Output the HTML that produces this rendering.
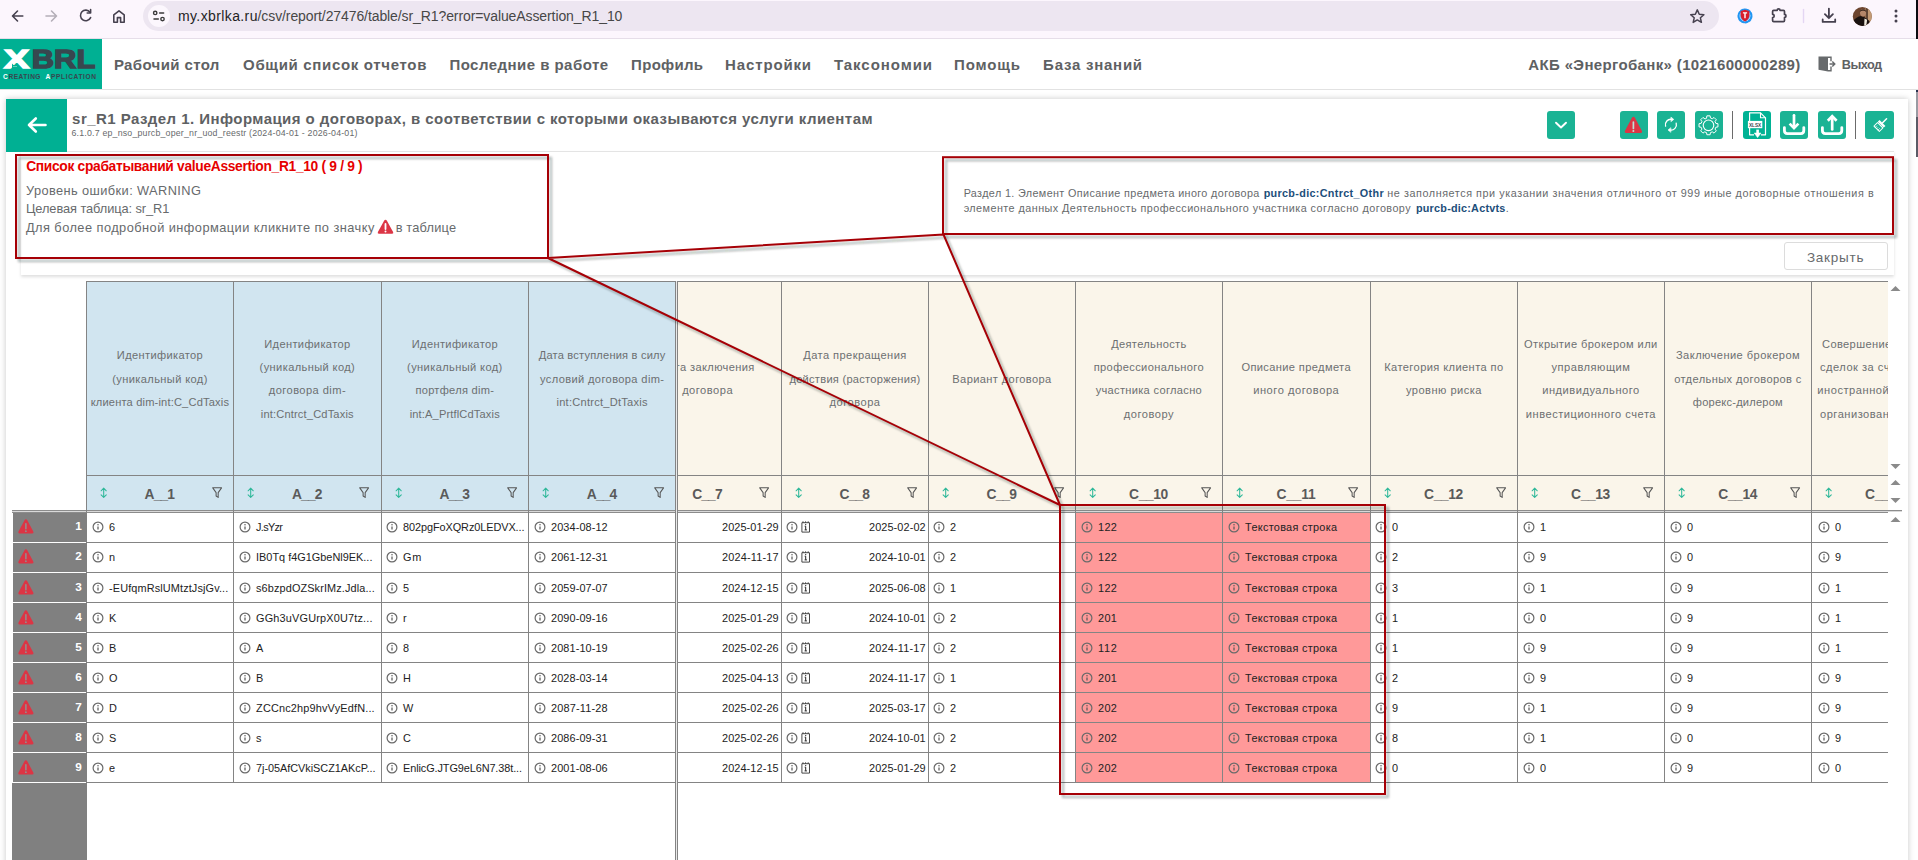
<!DOCTYPE html>
<html lang="ru"><head><meta charset="utf-8"><title>XBRL — sr_R1</title>
<style>
html,body{margin:0;padding:0}
body{width:1918px;height:860px;overflow:hidden;background:#fff;font-family:"Liberation Sans",sans-serif;color:#676a6c}
#root{position:relative;width:1918px;height:860px;overflow:hidden;background:#fff}
.t{position:absolute;white-space:pre;color:#676a6c}
.a{position:absolute}
svg{position:absolute;overflow:visible}
.btn{position:absolute;top:111px;width:28px;height:28px;border-radius:3px;background:#1ab394}
.hl{position:absolute;background:#848484;height:1px}
.vl{position:absolute;background:#848484;width:1px}
</style></head><body><div id="root">
<div class="a" id="chrome" style="left:0;top:0;width:1918px;height:38px;background:#fcf6fd;border-bottom:1px solid #e6dee9"></div>
<div class="a" style="left:143px;top:.5px;width:1576px;height:30.5px;border-radius:15.5px;background:#ede6f1"></div>
<div class="a" style="left:147.8px;top:4.8px;width:22.4px;height:22.4px;border-radius:50%;background:#fcf7fd"></div>
<svg style="left:0;top:0" width="240" height="38" viewBox="0 0 240 38" fill="none" stroke-linecap="round" stroke-linejoin="round">
<path d="M22.8 16H12.8M17.5 11l-5 5 5 5" stroke="#46414f" stroke-width="1.6"/>
<path d="M46 16h10.2M51.5 11l5 5-5 5" stroke="#b4aeb8" stroke-width="1.6"/>
<path d="M90 12.2A5.3 5.3 0 1 0 90.6 17.6" stroke="#46414f" stroke-width="1.6"/>
<path d="M90.6 9.6v3.4h-3.4" stroke="#46414f" stroke-width="1.6"/>
<path d="M113.8 22.2v-7.4l5.2-4 5.2 4v7.4h-3.6v-4.6h-3.2v4.6z" stroke="#46414f" stroke-width="1.6"/>
<circle cx="155.2" cy="12.9" r="1.7" stroke="#3a3a3a" stroke-width="1.4"/><path d="M159.6 12.9h4" stroke="#3a3a3a" stroke-width="1.5"/>
<circle cx="162.5" cy="19.1" r="1.7" stroke="#3a3a3a" stroke-width="1.4"/><path d="M154 19.1h4.300" stroke="#3a3a3a" stroke-width="1.5"/>
</svg>
<div class="t" style="left:177.96px;top:6.00px;font-size:14px;line-height:20px;letter-spacing:0.391px;color:#1f1f1f;">my.xbrlka.ru</div>
<div class="t" style="left:257.56px;top:6.00px;font-size:14px;line-height:20px;letter-spacing:-0.095px;color:#474747;">/csv/report/27476/table/sr_R1?error=valueAssertion_R1_10</div>
<svg style="left:1680px;top:0" width="238" height="38" viewBox="1680 0 238 38" fill="none" stroke-linecap="round" stroke-linejoin="round">
<path d="M1697.300 9.900l1.950 4.300 4.650.5-3.500 3.100 1 4.550-4.100-2.400-4.100 2.400 1-4.550-3.500-3.100 4.650-.5z" stroke="#46414f" stroke-width="1.500"/>
<circle cx="1745" cy="15.900" r="6.400" stroke="#2196f3" stroke-width="2.200" stroke-dasharray="2.300 1.300"/><circle cx="1745" cy="15.900" r="5" fill="#6db9f7" stroke="none"/>
<path d="M1745 9.800l4.400 1.300v4c0 3.200-2.100 5.300-4.400 6.400-2.300-1.100-4.400-3.200-4.400-6.400v-4z" fill="#d81e2c" stroke="none"/>
<path d="M1742.900 12.900h4.200M1745 12.900v5.400" stroke="#fff" stroke-width="1.400" stroke-linecap="butt"/>
<path d="M1773.700 10.300h3.500a1.400 1.400 0 0 1 2.800 0h3.400q1.100 0 1.100 1.100v3a1.500 1.500 0 0 1 0 3v3.100q0 1.100-1.100 1.100h-9.700q-1.100 0-1.100-1.100v-3a1.600 1.600 0 0 0 0-3.200v-2.900q0-1.100 1.100-1.100z" stroke="#46414f" stroke-width="1.700"/>
<path d="M1803.500 9.500v13" stroke="#e4d6f3" stroke-width="1.400"/>
<path d="M1828.900 8.600v9.400M1824.900 14.200l4 4 4-4M1822.700 19.400v2.500h12.500v-2.500" stroke="#46414f" stroke-width="1.800"/>
<clipPath id="av"><circle cx="1862.300" cy="16.400" r="9.500"/></clipPath>
<g clip-path="url(#av)" stroke="none"><rect x="1852" y="6" width="21" height="21" fill="#6d452f"/><rect x="1865.500" y="6" width="8" height="21" fill="#c39a74"/><rect x="1866.200" y="6" width="1.600" height="14" fill="#4a3226"/>
<path d="M1853 27v-5.500c2-3.500 5-5 8-5.500l4 1.500 4.500 3.500v6z" fill="#1a1210"/><path d="M1864.500 18.500l2.600 1.200-1 7.300h-2z" fill="#efe9dc"/>
<ellipse cx="1863" cy="12.800" rx="3" ry="3.700" fill="#b5876a"/><path d="M1859.800 12c0-3.500 6.400-3.800 6.400 0-1.500-1.600-4.900-1.600-6.400 0z" fill="#3a261c"/></g>
<circle cx="1896" cy="11" r="1.500" fill="#46414f"/><circle cx="1896" cy="16" r="1.500" fill="#46414f"/><circle cx="1896" cy="21" r="1.500" fill="#46414f"/>
</svg>
<div class="a" style="left:1916px;top:0;width:2px;height:72px;background:#0b0b10"></div>
<div class="a" style="left:1916px;top:72px;width:2px;height:20px;background:#2a3350"></div>
<div class="a" style="left:1916px;top:92px;width:2px;height:25px;background:#9a9aa2"></div>
<div class="a" style="left:1916px;top:117px;width:2px;height:40px;background:#5b5b66"></div>
<div class="a" id="nav" style="left:0;top:39px;width:1918px;height:50px;background:#fff;border-bottom:1px solid #e2e2e2"></div>
<div class="a" id="logo" style="left:0;top:39px;width:102px;height:50px;background:#00b093"></div>
<svg style="left:0;top:39px" width="102" height="50" viewBox="0 39 102 50" font-family="'Liberation Sans',sans-serif" font-weight="700">
<text x="4" y="68.200" font-size="26" fill="#fff" stroke="#fff" stroke-width="1.4" textLength="25.200" lengthAdjust="spacingAndGlyphs">X</text>
<text x="31.800" y="68.200" font-size="26" fill="#37474f" stroke="#37474f" stroke-width="1.4" textLength="63.500" lengthAdjust="spacingAndGlyphs">BRL</text>
<path d="M12 69v-5.500l1.500 1.500h3l1.500-1.500v5.500z" fill="#00b093"/><circle cx="14" cy="66.600" r=".5" fill="#fff"/><circle cx="16" cy="66.600" r=".5" fill="#fff"/>
<text x="3" y="79" font-size="6.600" fill="#fff" textLength="4.800" lengthAdjust="spacingAndGlyphs">C</text>
<text x="8.500" y="79" font-size="6.600" fill="#37474f" textLength="32" lengthAdjust="spacing">REATING</text>
<text x="45.500" y="79" font-size="6.600" fill="#fff" textLength="4.800" lengthAdjust="spacingAndGlyphs">A</text>
<text x="51" y="79" font-size="6.600" fill="#37474f" textLength="45" lengthAdjust="spacing">PPLICATION</text>
</svg>
<div class="t" style="left:113.90px;top:54.00px;font-size:15px;line-height:21px;letter-spacing:0.378px;font-weight:700;color:#5e6163;">Рабочий стол</div>
<div class="t" style="left:243.10px;top:54.00px;font-size:15px;line-height:21px;letter-spacing:0.672px;font-weight:700;color:#5e6163;">Общий список отчетов</div>
<div class="t" style="left:449.40px;top:54.00px;font-size:15px;line-height:21px;letter-spacing:0.469px;font-weight:700;color:#5e6163;">Последние в работе</div>
<div class="t" style="left:631.10px;top:54.00px;font-size:15px;line-height:21px;letter-spacing:0.299px;font-weight:700;color:#5e6163;">Профиль</div>
<div class="t" style="left:725.10px;top:54.00px;font-size:15px;line-height:21px;letter-spacing:0.857px;font-weight:700;color:#5e6163;">Настройки</div>
<div class="t" style="left:834.10px;top:54.00px;font-size:15px;line-height:21px;letter-spacing:0.943px;font-weight:700;color:#5e6163;">Таксономии</div>
<div class="t" style="left:954.10px;top:54.00px;font-size:15px;line-height:21px;letter-spacing:0.863px;font-weight:700;color:#5e6163;">Помощь</div>
<div class="t" style="left:1043.10px;top:54.00px;font-size:15px;line-height:21px;letter-spacing:0.756px;font-weight:700;color:#5e6163;">База знаний</div>
<div class="t" style="left:1528.30px;top:54.00px;font-size:15px;line-height:21px;letter-spacing:0.359px;font-weight:700;color:#5e6163;">АКБ «Энергобанк» (1021600000289)</div>
<svg style="left:1817px;top:55px" width="20" height="18" viewBox="1817 55 20 18">
<path d="M1818.500 56.500h9.500v15l-9.500-1.800z" fill="#676a6c"/><path d="M1828 57.300h3v4M1831 66.500v4.200h-3" fill="none" stroke="#676a6c" stroke-width="1.400"/>
<path d="M1829.500 64h5M1832.300 61.500l2.500 2.500-2.500 2.500" fill="none" stroke="#676a6c" stroke-width="1.400"/></svg>
<div class="t" style="left:1841.84px;top:56.00px;font-size:12.7px;line-height:18px;letter-spacing:-0.544px;font-weight:700;color:#5e6163;">Выход</div>
<div class="a" id="card" style="left:6px;top:99px;width:1902px;height:800px;background:#fff;box-shadow:0 0 6px rgba(0,0,0,.22)"></div>
<div class="t" style="left:72.10px;top:108.00px;font-size:15px;line-height:21px;letter-spacing:0.449px;font-weight:700;color:#5e6163;">sr_R1 Раздел 1. Информация о договорах, в соответствии с которыми оказываются услуги клиентам</div>
<div class="t" style="left:71.47px;top:127.00px;font-size:8.8px;line-height:12px;letter-spacing:0.197px;">6.1.0.7 ep_nso_purcb_oper_nr_uod_reestr (2024-04-01 - 2026-04-01)</div>
<div class="btn" style="left:1547px;width:28px"><svg style="left:0;top:0" width="28" height="28" viewBox="0 0 28 28" fill="none" stroke="#fff" stroke-linecap="round" stroke-linejoin="round"><path d="M9 11.700l5 4.800 5-4.800" stroke-width="1.900"/></svg></div>
<div class="btn" style="left:1620px;width:28px"><svg style="left:0;top:0" width="28" height="28" viewBox="0 0 28 28" fill="none" stroke="#fff" stroke-linecap="round" stroke-linejoin="round"><path d="M13.400 5.800q1 0 1.500 1l6.900 13q.9 2.100-1.100 2.100h-14.600q-2 0-1.100-2.100l6.900-13q.5-1 1.500-1z" fill="#dc3545" stroke="none"/><path d="M13.400 11v6.400" stroke="#bfe0d8" stroke-width="1.700"/><circle cx="13.400" cy="20" r="1" fill="#bfe0d8" stroke="none"/></svg></div>
<div class="btn" style="left:1657px;width:28px"><svg style="left:0;top:0" width="28" height="28" viewBox="0 0 28 28" fill="none" stroke="#fff" stroke-linecap="round" stroke-linejoin="round"><path d="M8.600 15.200a5.400 5.400 0 0 1 6.300-6.800M19.200 12.200a5.400 5.400 0 0 1-6.300 6.800" stroke-width="1.300"/><path d="M14.200 6.300l2.600 2.100-2.600 2.100zM13.600 16.900l-2.600 2.100 2.600 2.100z" fill="#fff" stroke-width=".6"/></svg></div>
<div class="btn" style="left:1695px;width:28px"><svg style="left:0;top:0" width="28" height="28" viewBox="0 0 28 28" fill="none" stroke="#fff" stroke-linecap="round" stroke-linejoin="round"><path d="M11.55 6.96L11.88 4.84L15.12 4.84L15.45 6.96L17.31 7.73L19.04 6.46L21.34 8.76L20.07 10.49L20.84 12.35L22.96 12.68L22.96 15.92L20.84 16.25L20.07 18.11L21.34 19.84L19.04 22.14L17.31 20.87L15.45 21.64L15.12 23.76L11.88 23.76L11.55 21.64L9.69 20.87L7.96 22.14L5.66 19.84L6.93 18.11L6.16 16.25L4.04 15.92L4.04 12.68L6.16 12.35L6.93 10.49L5.66 8.76L7.96 6.46L9.69 7.73z" stroke-width="1"/><circle cx="13.500" cy="14.300" r="5.300" stroke-width="1.100"/></svg></div>
<div class="a" style="left:1732px;top:111px;width:1px;height:28px;background:#6b6b6b"></div>
<div class="btn" style="left:1743px;background:#00b294"><svg style="left:0;top:0" width="28" height="28" viewBox="0 0 28 28" fill="none" stroke="#fff" stroke-linejoin="round"><path d="M11 23.800h-4.400v-22h10.900l5 5v17h-4.500" stroke-width="1.200"/><path d="M17.500 1.800v5h5" stroke-width="1.100"/><rect x="4.900" y="9.900" width="14.400" height="7.300" fill="#fff" stroke="none"/><path d="M14.600 18.600v4" stroke-width="2.600"/><path d="M11.200 22l3.400 4.600 3.400-4.600z" fill="#fff" stroke-width=".5"/><text x="6" y="15.700" font-family="'Liberation Sans',sans-serif" font-size="5.600" font-weight="700" fill="#37474f" stroke="none" textLength="12.200" lengthAdjust="spacingAndGlyphs">XLSX</text></svg></div>
<div class="btn" style="left:1780px;width:28px"><svg style="left:0;top:0" width="28" height="28" viewBox="0 0 28 28" fill="none" stroke="#fff" stroke-linecap="round" stroke-linejoin="round"><path d="M14 4.300v12" stroke-width="2.700"/><path d="M9.600 12.600l4.400 4.500 4.400-4.500" stroke-width="2.700" stroke-linejoin="miter" stroke-linecap="butt"/><path d="M4.400 16.600v3q0 3 3 3h13.400q3 0 3-3v-3" stroke-width="2.800"/></svg></div>
<div class="btn" style="left:1818px;width:28px"><svg style="left:0;top:0" width="28" height="28" viewBox="0 0 28 28" fill="none" stroke="#fff" stroke-linecap="round" stroke-linejoin="round"><path d="M14.200 6v12.400" stroke-width="2.700"/><path d="M9.800 9.800l4.400-4.500 4.400 4.500" stroke-width="2.700" stroke-linejoin="miter" stroke-linecap="butt"/><path d="M4.400 16.600v3q0 3 3 3h13.400q3 0 3-3v-3" stroke-width="2.800"/></svg></div>
<div class="a" style="left:1855px;top:111px;width:1px;height:28px;background:#6b6b6b"></div>
<div class="btn" style="left:1865px;width:29px"><svg style="left:0;top:0" width="29" height="28" viewBox="0 0 29 28" fill="none" stroke="#fff" stroke-linecap="round" stroke-linejoin="round"><g transform="rotate(45 15.200 14.200)"><path d="M15.200 5.200v6" stroke-width="1.500"/><path d="M11 11h8.400v2.400h-8.400z" fill="#fff" stroke="none"/><path d="M11.400 14.200h7.600v5h-7.600z" stroke-width="1"/><path d="M13.300 17v2M15.200 17.600v1.400M17.100 17v2" stroke-width=".7"/></g></svg></div>
<div class="a" id="errpanel" style="left:21px;top:151px;width:1873px;height:123px;background:#fff;border-top:1px solid #e4e4e4;box-shadow:0 2px 3px rgba(0,0,0,.13)"></div>
<div class="a" id="back" style="left:6px;top:99px;width:61px;height:52.5px;background:#00b093"></div>
<svg style="left:24px;top:114px" width="26" height="22" viewBox="24 114 26 22"><path d="M45.500 125h-16.500M35.800 118.500l-6.800 6.500 6.800 6.500" fill="none" stroke="#fff" stroke-width="2.600" stroke-linecap="round" stroke-linejoin="round"/></svg>
<div class="t" style="left:26.17px;top:157.00px;font-size:13.8px;line-height:19px;letter-spacing:-0.317px;font-weight:700;color:#e60000;">Список срабатываний valueAssertion_R1_10 ( 9 / 9 )</div>
<div class="t" style="left:25.93px;top:182.00px;font-size:12.8px;line-height:18px;letter-spacing:0.411px;">Уровень ошибки: WARNING</div>
<div class="t" style="left:25.93px;top:200.00px;font-size:12.8px;line-height:18px;letter-spacing:-0.067px;">Целевая таблица: sr_R1</div>
<div class="t" style="left:25.93px;top:219.00px;font-size:12.8px;line-height:18px;letter-spacing:0.455px;">Для более подробной информации кликните по значку</div>
<svg style="left:377px;top:219px" width="17" height="16" viewBox="0 0 17 16"><path d="M8.500 .8q.9 0 1.400.9l6.200 11.300q.8 1.800-1 1.800h-13.200q-1.800 0-1-1.800l6.200-11.300q.5-.9 1.400-.9z" fill="#dc3545"/><path d="M8.500 5v5" stroke="#fff" stroke-width="1.800" stroke-linecap="round"/><circle cx="8.500" cy="12.400" r="1" fill="#fff"/></svg>
<div class="t" style="left:395.63px;top:219.00px;font-size:12.8px;line-height:18px;letter-spacing:0.191px;">в таблице</div>
<div class="t" style="left:963.65px;top:186.00px;font-size:10.8px;line-height:15px;letter-spacing:0.370px;">Раздел 1. Элемент Описание предмета иного договора</div>
<div class="t" style="left:1263.65px;top:186.00px;font-size:10.8px;line-height:15px;letter-spacing:0.331px;font-weight:700;color:#1c4e7a;">purcb-dic:Cntrct_Othr</div>
<div class="t" style="left:1387.35px;top:186.00px;font-size:10.8px;line-height:15px;letter-spacing:0.560px;">не заполняется при указании значения отличного от 999 иные договорные отношения в</div>
<div class="t" style="left:963.65px;top:201.00px;font-size:10.8px;line-height:15px;letter-spacing:0.452px;">элементе данных Деятельность профессионального участника согласно договору</div>
<div class="t" style="left:1415.95px;top:201.00px;font-size:10.8px;line-height:15px;letter-spacing:0.240px;font-weight:700;color:#1c4e7a;">purcb-dic:Actvts</div>
<div class="t" style="left:1505.75px;top:201.00px;font-size:10.8px;line-height:15px;">.</div>
<div class="a" id="close" style="left:1783.5px;top:241.5px;width:102px;height:26px;border:1px solid #dcdcdc;border-radius:3px;background:#fff;box-sizing:content-box"></div>
<div class="t" style="left:1806.89px;top:248.00px;font-size:13.5px;line-height:19px;letter-spacing:0.783px;">Закрыть</div>
<div style="position:absolute;left:86px;top:281px;width:590px;height:229px;background:#d1e5f0"></div>
<div style="position:absolute;left:678px;top:281px;width:1210px;height:229px;background:#faf5ea"></div>
<div style="position:absolute;left:1076px;top:513px;width:294px;height:269px;background:#ff9999"></div>
<div class="hl" style="left:86px;top:281px;width:590px;height:1px;background:#848484"></div>
<div class="hl" style="left:678px;top:281px;width:1210px;height:1px;background:#848484"></div>
<div class="hl" style="left:86px;top:475px;width:1802px;height:1px;background:#848484"></div>
<div class="hl" style="left:12px;top:510px;width:1890px;height:1px;background:#8c8c8c"></div>
<div class="hl" style="left:12px;top:511px;width:1890px;height:1px;background:#d9d9d9"></div>
<div class="hl" style="left:12px;top:512px;width:1876px;height:1px;background:#8c8c8c"></div>
<div class="vl" style="left:86px;top:281px;height:502px;width:1px;background:#848484"></div>
<div class="vl" style="left:233px;top:281px;height:502px;width:1px;background:#848484"></div>
<div class="vl" style="left:381px;top:281px;height:502px;width:1px;background:#848484"></div>
<div class="vl" style="left:528px;top:281px;height:502px;width:1px;background:#848484"></div>
<div class="vl" style="left:675px;top:281px;height:502px;width:1px;background:#848484"></div>
<div class="vl" style="left:781px;top:281px;height:502px;width:1px;background:#848484"></div>
<div class="vl" style="left:928px;top:281px;height:502px;width:1px;background:#848484"></div>
<div class="vl" style="left:1075px;top:281px;height:502px;width:1px;background:#848484"></div>
<div class="vl" style="left:1222px;top:281px;height:502px;width:1px;background:#848484"></div>
<div class="vl" style="left:1370px;top:281px;height:502px;width:1px;background:#848484"></div>
<div class="vl" style="left:1517px;top:281px;height:502px;width:1px;background:#848484"></div>
<div class="vl" style="left:1664px;top:281px;height:502px;width:1px;background:#848484"></div>
<div class="vl" style="left:1811px;top:281px;height:502px;width:1px;background:#848484"></div>
<div class="vl" style="left:675px;top:281px;height:600px;width:1px;background:#848484"></div>
<div class="vl" style="left:677px;top:281px;height:600px;width:1px;background:#848484"></div>
<div style="position:absolute;left:676px;top:281px;width:1px;height:600px;background:#e9e9e9"></div>
<div class="hl" style="left:86px;top:542px;width:590px;height:1px;background:#848484"></div>
<div class="hl" style="left:678px;top:542px;width:1210px;height:1px;background:#848484"></div>
<div class="hl" style="left:86px;top:572px;width:590px;height:1px;background:#848484"></div>
<div class="hl" style="left:678px;top:572px;width:1210px;height:1px;background:#848484"></div>
<div class="hl" style="left:86px;top:602px;width:590px;height:1px;background:#848484"></div>
<div class="hl" style="left:678px;top:602px;width:1210px;height:1px;background:#848484"></div>
<div class="hl" style="left:86px;top:632px;width:590px;height:1px;background:#848484"></div>
<div class="hl" style="left:678px;top:632px;width:1210px;height:1px;background:#848484"></div>
<div class="hl" style="left:86px;top:662px;width:590px;height:1px;background:#848484"></div>
<div class="hl" style="left:678px;top:662px;width:1210px;height:1px;background:#848484"></div>
<div class="hl" style="left:86px;top:692px;width:590px;height:1px;background:#848484"></div>
<div class="hl" style="left:678px;top:692px;width:1210px;height:1px;background:#848484"></div>
<div class="hl" style="left:86px;top:722px;width:590px;height:1px;background:#848484"></div>
<div class="hl" style="left:678px;top:722px;width:1210px;height:1px;background:#848484"></div>
<div class="hl" style="left:86px;top:752px;width:590px;height:1px;background:#848484"></div>
<div class="hl" style="left:678px;top:752px;width:1210px;height:1px;background:#848484"></div>
<div class="hl" style="left:86px;top:782px;width:590px;height:1px;background:#848484"></div>
<div class="hl" style="left:678px;top:782px;width:1210px;height:1px;background:#848484"></div>
<div style="position:absolute;left:13px;top:513px;width:74px;height:400px;background:#808080"></div>
<div class="hl" style="left:13px;top:542px;width:73px;height:1px;background:#ffffff"></div>
<div class="hl" style="left:13px;top:572px;width:73px;height:1px;background:#ffffff"></div>
<div class="hl" style="left:13px;top:602px;width:73px;height:1px;background:#ffffff"></div>
<div class="hl" style="left:13px;top:632px;width:73px;height:1px;background:#ffffff"></div>
<div class="hl" style="left:13px;top:662px;width:73px;height:1px;background:#ffffff"></div>
<div class="hl" style="left:13px;top:692px;width:73px;height:1px;background:#ffffff"></div>
<div class="hl" style="left:13px;top:722px;width:73px;height:1px;background:#ffffff"></div>
<div class="hl" style="left:13px;top:752px;width:73px;height:1px;background:#ffffff"></div>
<div class="hl" style="left:13px;top:782px;width:73px;height:1px;background:#ffffff"></div>
<div style="position:absolute;left:12px;top:783px;width:1px;height:100px;background:#808080"></div>
<div style="position:absolute;left:1888px;top:281px;width:14px;height:229px;background:#fff"></div>
<div style="position:absolute;left:1888px;top:513px;width:20px;height:400px;background:#fff"></div>
<svg style="left:0;top:0" width="1" height="1"><polygon points="1890.5,291 1900.5,291 1895.5,286" fill="#8a8a8a"/></svg>
<svg style="left:0;top:0" width="1" height="1"><polygon points="1890.5,464 1900.5,464 1895.5,469" fill="#8a8a8a"/></svg>
<svg style="left:0;top:0" width="1" height="1"><polygon points="1890.5,485 1900.5,485 1895.5,480" fill="#8a8a8a"/></svg>
<svg style="left:0;top:0" width="1" height="1"><polygon points="1890.5,498 1900.5,498 1895.5,503" fill="#8a8a8a"/></svg>
<svg style="left:0;top:0" width="1" height="1"><polygon points="1890.5,522 1900.5,522 1895.5,517" fill="#8a8a8a"/></svg>
<div class="t" style="left:116.85px;top:347.00px;font-size:11.1px;line-height:16px;letter-spacing:0.353px;color:#6c6f71;">Идентификатор</div>
<div class="t" style="left:112.19px;top:371.00px;font-size:11.1px;line-height:16px;letter-spacing:0.378px;color:#6c6f71;">(уникальный код)</div>
<div class="t" style="left:90.63px;top:394.00px;font-size:11.1px;line-height:16px;letter-spacing:0.174px;color:#6c6f71;">клиента dim-int:C_CdTaxis</div>
<div class="t" style="left:264.25px;top:336.00px;font-size:11.1px;line-height:16px;letter-spacing:0.353px;color:#6c6f71;">Идентификатор</div>
<div class="t" style="left:259.59px;top:359.00px;font-size:11.1px;line-height:16px;letter-spacing:0.378px;color:#6c6f71;">(уникальный код)</div>
<div class="t" style="left:268.79px;top:382.00px;font-size:11.1px;line-height:16px;letter-spacing:0.439px;color:#6c6f71;">договора dim-</div>
<div class="t" style="left:260.79px;top:406.00px;font-size:11.1px;line-height:16px;letter-spacing:0.165px;color:#6c6f71;">int:Cntrct_CdTaxis</div>
<div class="t" style="left:411.75px;top:336.00px;font-size:11.1px;line-height:16px;letter-spacing:0.353px;color:#6c6f71;">Идентификатор</div>
<div class="t" style="left:407.09px;top:359.00px;font-size:11.1px;line-height:16px;letter-spacing:0.378px;color:#6c6f71;">(уникальный код)</div>
<div class="t" style="left:415.43px;top:382.00px;font-size:11.1px;line-height:16px;letter-spacing:0.273px;color:#6c6f71;">портфеля dim-</div>
<div class="t" style="left:409.70px;top:406.00px;font-size:11.1px;line-height:16px;letter-spacing:0.144px;color:#6c6f71;">int:A_PrtflCdTaxis</div>
<div class="t" style="left:538.71px;top:347.00px;font-size:11.1px;line-height:16px;letter-spacing:0.193px;color:#6c6f71;">Дата вступления в силу</div>
<div class="t" style="left:539.96px;top:371.00px;font-size:11.1px;line-height:16px;letter-spacing:0.371px;color:#6c6f71;">условий договора dim-</div>
<div class="t" style="left:556.47px;top:394.00px;font-size:11.1px;line-height:16px;letter-spacing:0.243px;color:#6c6f71;">int:Cntrct_DtTaxis</div>
<div class="a" style="left:678px;top:282px;width:103px;height:228px;overflow:hidden"><div class="a" style="left:-678px;top:-282px;width:1918px;height:860px">
<div class="t" style="left:660.39px;top:359.00px;font-size:11.1px;line-height:16px;letter-spacing:0.378px;color:#6c6f71;">Дата заключения</div>
<div class="t" style="left:682.14px;top:382.00px;font-size:11.1px;line-height:16px;letter-spacing:0.516px;color:#6c6f71;">договора</div>
</div></div>
<div class="t" style="left:803.29px;top:347.00px;font-size:11.1px;line-height:16px;letter-spacing:0.421px;color:#6c6f71;">Дата прекращения</div>
<div class="t" style="left:789.43px;top:371.00px;font-size:11.1px;line-height:16px;letter-spacing:0.266px;color:#6c6f71;">действия (расторжения)</div>
<div class="t" style="left:829.54px;top:394.00px;font-size:11.1px;line-height:16px;letter-spacing:0.516px;color:#6c6f71;">договора</div>
<div class="t" style="left:952.32px;top:371.00px;font-size:11.1px;line-height:16px;letter-spacing:0.378px;color:#6c6f71;">Вариант договора</div>
<div class="t" style="left:1111.16px;top:336.00px;font-size:11.1px;line-height:16px;letter-spacing:0.334px;color:#6c6f71;">Деятельность</div>
<div class="t" style="left:1093.65px;top:359.00px;font-size:11.1px;line-height:16px;letter-spacing:0.385px;color:#6c6f71;">профессионального</div>
<div class="t" style="left:1095.63px;top:382.00px;font-size:11.1px;line-height:16px;letter-spacing:0.306px;color:#6c6f71;">участника согласно</div>
<div class="t" style="left:1123.75px;top:406.00px;font-size:11.1px;line-height:16px;letter-spacing:0.536px;color:#6c6f71;">договору</div>
<div class="t" style="left:1241.38px;top:359.00px;font-size:11.1px;line-height:16px;letter-spacing:0.374px;color:#6c6f71;">Описание предмета</div>
<div class="t" style="left:1253.20px;top:382.00px;font-size:11.1px;line-height:16px;letter-spacing:0.549px;color:#6c6f71;">иного договора</div>
<div class="t" style="left:1384.25px;top:359.00px;font-size:11.1px;line-height:16px;letter-spacing:0.401px;color:#6c6f71;">Категория клиента по</div>
<div class="t" style="left:1405.93px;top:382.00px;font-size:11.1px;line-height:16px;letter-spacing:0.470px;color:#6c6f71;">уровню риска</div>
<div class="t" style="left:1524.08px;top:336.00px;font-size:11.1px;line-height:16px;letter-spacing:0.412px;color:#6c6f71;">Открытие брокером или</div>
<div class="t" style="left:1551.40px;top:359.00px;font-size:11.1px;line-height:16px;letter-spacing:0.530px;color:#6c6f71;">управляющим</div>
<div class="t" style="left:1542.16px;top:382.00px;font-size:11.1px;line-height:16px;letter-spacing:0.529px;color:#6c6f71;">индивидуального</div>
<div class="t" style="left:1525.87px;top:406.00px;font-size:11.1px;line-height:16px;letter-spacing:0.512px;color:#6c6f71;">инвестиционного счета</div>
<div class="t" style="left:1675.96px;top:347.00px;font-size:11.1px;line-height:16px;letter-spacing:0.442px;color:#6c6f71;">Заключение брокером</div>
<div class="t" style="left:1674.20px;top:371.00px;font-size:11.1px;line-height:16px;letter-spacing:0.395px;color:#6c6f71;">отдельных договоров с</div>
<div class="t" style="left:1692.87px;top:394.00px;font-size:11.1px;line-height:16px;letter-spacing:0.209px;color:#6c6f71;">форекс-дилером</div>
<div class="a" style="left:1812px;top:282px;width:76px;height:228px;overflow:hidden"><div class="a" style="left:-1812px;top:-282px;width:1918px;height:860px">
<div class="t" style="left:1822.00px;top:336.00px;font-size:11.1px;line-height:16px;letter-spacing:0.369px;color:#6c6f71;">Совершение брокером</div>
<div class="t" style="left:1820.00px;top:359.00px;font-size:11.1px;line-height:16px;letter-spacing:0.490px;color:#6c6f71;">сделок за счет клиента</div>
<div class="t" style="left:1817.30px;top:382.00px;font-size:11.1px;line-height:16px;letter-spacing:0.535px;color:#6c6f71;">иностранной валюты на</div>
<div class="t" style="left:1820.00px;top:406.00px;font-size:11.1px;line-height:16px;letter-spacing:0.500px;color:#6c6f71;">организованных торгах</div>
</div></div>
<svg style="left:100.0px;top:486.600px" width="7.400" height="11.600" viewBox="0 0 8 12"><path d="M4 1.200v9.600M1.200 3.800l2.800-2.800 2.800 2.800M1.200 8.200l2.800 2.800 2.800-2.800" fill="none" stroke="#2fb89a" stroke-width="1.150" stroke-linecap="round" stroke-linejoin="round"/></svg>
<div class="t" style="left:144.55px;top:485.00px;font-size:13.8px;line-height:19px;letter-spacing:-0.828px;font-weight:700;color:#5a5a5a;">A__1</div>
<svg style="left:211.7px;top:487px" width="10.300" height="12" viewBox="0 0 11 12" preserveAspectRatio="none"><path d="M.8 .8h9.400l-3.600 4.800v4.800l-2.200-1.400v-3.400z" fill="none" stroke="#555" stroke-width="1.100" stroke-linejoin="round"/></svg>
<svg style="left:247.0px;top:486.600px" width="7.400" height="11.600" viewBox="0 0 8 12"><path d="M4 1.200v9.600M1.200 3.800l2.800-2.800 2.800 2.800M1.200 8.200l2.800 2.800 2.800-2.800" fill="none" stroke="#2fb89a" stroke-width="1.150" stroke-linecap="round" stroke-linejoin="round"/></svg>
<div class="t" style="left:291.95px;top:485.00px;font-size:13.8px;line-height:19px;letter-spacing:-0.828px;font-weight:700;color:#5a5a5a;">A__2</div>
<svg style="left:358.7px;top:487px" width="10.300" height="12" viewBox="0 0 11 12" preserveAspectRatio="none"><path d="M.8 .8h9.400l-3.600 4.800v4.800l-2.200-1.400v-3.400z" fill="none" stroke="#555" stroke-width="1.100" stroke-linejoin="round"/></svg>
<svg style="left:395.0px;top:486.600px" width="7.400" height="11.600" viewBox="0 0 8 12"><path d="M4 1.200v9.600M1.200 3.800l2.800-2.800 2.800 2.800M1.200 8.200l2.800 2.800 2.800-2.800" fill="none" stroke="#2fb89a" stroke-width="1.150" stroke-linecap="round" stroke-linejoin="round"/></svg>
<div class="t" style="left:439.45px;top:485.00px;font-size:13.8px;line-height:19px;letter-spacing:-0.828px;font-weight:700;color:#5a5a5a;">A__3</div>
<svg style="left:506.7px;top:487px" width="10.300" height="12" viewBox="0 0 11 12" preserveAspectRatio="none"><path d="M.8 .8h9.400l-3.600 4.800v4.800l-2.200-1.400v-3.400z" fill="none" stroke="#555" stroke-width="1.100" stroke-linejoin="round"/></svg>
<svg style="left:542.0px;top:486.600px" width="7.400" height="11.600" viewBox="0 0 8 12"><path d="M4 1.200v9.600M1.200 3.800l2.800-2.800 2.800 2.800M1.200 8.200l2.800 2.800 2.800-2.800" fill="none" stroke="#2fb89a" stroke-width="1.150" stroke-linecap="round" stroke-linejoin="round"/></svg>
<div class="t" style="left:586.75px;top:485.00px;font-size:13.8px;line-height:19px;letter-spacing:-0.828px;font-weight:700;color:#5a5a5a;">A__4</div>
<svg style="left:653.7px;top:487px" width="10.300" height="12" viewBox="0 0 11 12" preserveAspectRatio="none"><path d="M.8 .8h9.400l-3.600 4.800v4.800l-2.200-1.400v-3.400z" fill="none" stroke="#555" stroke-width="1.100" stroke-linejoin="round"/></svg>
<div class="t" style="left:692.15px;top:485.00px;font-size:13.8px;line-height:19px;letter-spacing:-0.828px;font-weight:700;color:#5a5a5a;">C__7</div>
<svg style="left:758.9000000000001px;top:487px" width="10.300" height="12" viewBox="0 0 11 12" preserveAspectRatio="none"><path d="M.8 .8h9.400l-3.600 4.800v4.800l-2.200-1.400v-3.400z" fill="none" stroke="#555" stroke-width="1.100" stroke-linejoin="round"/></svg>
<svg style="left:795.0px;top:486.600px" width="7.400" height="11.600" viewBox="0 0 8 12"><path d="M4 1.200v9.600M1.200 3.800l2.800-2.800 2.800 2.800M1.200 8.200l2.800 2.800 2.800-2.800" fill="none" stroke="#2fb89a" stroke-width="1.150" stroke-linecap="round" stroke-linejoin="round"/></svg>
<div class="t" style="left:839.55px;top:485.00px;font-size:13.8px;line-height:19px;letter-spacing:-0.828px;font-weight:700;color:#5a5a5a;">C__8</div>
<svg style="left:906.7px;top:487px" width="10.300" height="12" viewBox="0 0 11 12" preserveAspectRatio="none"><path d="M.8 .8h9.400l-3.600 4.800v4.800l-2.200-1.400v-3.400z" fill="none" stroke="#555" stroke-width="1.100" stroke-linejoin="round"/></svg>
<svg style="left:942.0px;top:486.600px" width="7.400" height="11.600" viewBox="0 0 8 12"><path d="M4 1.200v9.600M1.200 3.800l2.800-2.800 2.800 2.800M1.200 8.200l2.800 2.800 2.800-2.800" fill="none" stroke="#2fb89a" stroke-width="1.150" stroke-linecap="round" stroke-linejoin="round"/></svg>
<div class="t" style="left:986.55px;top:485.00px;font-size:13.8px;line-height:19px;letter-spacing:-0.828px;font-weight:700;color:#5a5a5a;">C__9</div>
<svg style="left:1053.7px;top:487px" width="10.300" height="12" viewBox="0 0 11 12" preserveAspectRatio="none"><path d="M.8 .8h9.400l-3.600 4.800v4.800l-2.200-1.400v-3.400z" fill="none" stroke="#555" stroke-width="1.100" stroke-linejoin="round"/></svg>
<svg style="left:1089.0px;top:486.600px" width="7.400" height="11.600" viewBox="0 0 8 12"><path d="M4 1.200v9.600M1.200 3.800l2.800-2.800 2.800 2.800M1.200 8.200l2.800 2.800 2.800-2.800" fill="none" stroke="#2fb89a" stroke-width="1.150" stroke-linecap="round" stroke-linejoin="round"/></svg>
<div class="t" style="left:1129.10px;top:485.00px;font-size:13.8px;line-height:19px;letter-spacing:-0.368px;font-weight:700;color:#5a5a5a;">C__10</div>
<svg style="left:1200.7px;top:487px" width="10.300" height="12" viewBox="0 0 11 12" preserveAspectRatio="none"><path d="M.8 .8h9.400l-3.600 4.800v4.800l-2.200-1.400v-3.400z" fill="none" stroke="#555" stroke-width="1.100" stroke-linejoin="round"/></svg>
<svg style="left:1236.0px;top:486.600px" width="7.400" height="11.600" viewBox="0 0 8 12"><path d="M4 1.200v9.600M1.200 3.800l2.800-2.800 2.800 2.800M1.200 8.200l2.800 2.800 2.800-2.800" fill="none" stroke="#2fb89a" stroke-width="1.150" stroke-linecap="round" stroke-linejoin="round"/></svg>
<div class="t" style="left:1276.40px;top:485.00px;font-size:13.8px;line-height:19px;letter-spacing:-0.177px;font-weight:700;color:#5a5a5a;">C__11</div>
<svg style="left:1347.7px;top:487px" width="10.300" height="12" viewBox="0 0 11 12" preserveAspectRatio="none"><path d="M.8 .8h9.400l-3.600 4.800v4.800l-2.200-1.400v-3.400z" fill="none" stroke="#555" stroke-width="1.100" stroke-linejoin="round"/></svg>
<svg style="left:1384.0px;top:486.600px" width="7.400" height="11.600" viewBox="0 0 8 12"><path d="M4 1.200v9.600M1.200 3.800l2.800-2.800 2.800 2.800M1.200 8.200l2.800 2.800 2.800-2.800" fill="none" stroke="#2fb89a" stroke-width="1.150" stroke-linecap="round" stroke-linejoin="round"/></svg>
<div class="t" style="left:1424.10px;top:485.00px;font-size:13.8px;line-height:19px;letter-spacing:-0.368px;font-weight:700;color:#5a5a5a;">C__12</div>
<svg style="left:1495.7px;top:487px" width="10.300" height="12" viewBox="0 0 11 12" preserveAspectRatio="none"><path d="M.8 .8h9.400l-3.600 4.800v4.800l-2.200-1.400v-3.400z" fill="none" stroke="#555" stroke-width="1.100" stroke-linejoin="round"/></svg>
<svg style="left:1531.0px;top:486.600px" width="7.400" height="11.600" viewBox="0 0 8 12"><path d="M4 1.200v9.600M1.200 3.800l2.800-2.800 2.800 2.800M1.200 8.200l2.800 2.800 2.800-2.800" fill="none" stroke="#2fb89a" stroke-width="1.150" stroke-linecap="round" stroke-linejoin="round"/></svg>
<div class="t" style="left:1571.10px;top:485.00px;font-size:13.8px;line-height:19px;letter-spacing:-0.368px;font-weight:700;color:#5a5a5a;">C__13</div>
<svg style="left:1642.7px;top:487px" width="10.300" height="12" viewBox="0 0 11 12" preserveAspectRatio="none"><path d="M.8 .8h9.400l-3.600 4.800v4.800l-2.200-1.400v-3.400z" fill="none" stroke="#555" stroke-width="1.100" stroke-linejoin="round"/></svg>
<svg style="left:1678.0px;top:486.600px" width="7.400" height="11.600" viewBox="0 0 8 12"><path d="M4 1.200v9.600M1.200 3.800l2.800-2.800 2.800 2.800M1.200 8.200l2.800 2.800 2.800-2.800" fill="none" stroke="#2fb89a" stroke-width="1.150" stroke-linecap="round" stroke-linejoin="round"/></svg>
<div class="t" style="left:1718.20px;top:485.00px;font-size:13.8px;line-height:19px;letter-spacing:-0.368px;font-weight:700;color:#5a5a5a;">C__14</div>
<svg style="left:1789.7px;top:487px" width="10.300" height="12" viewBox="0 0 11 12" preserveAspectRatio="none"><path d="M.8 .8h9.400l-3.600 4.800v4.800l-2.200-1.400v-3.400z" fill="none" stroke="#555" stroke-width="1.100" stroke-linejoin="round"/></svg>
<div class="a" style="left:1812px;top:477px;width:76px;height:33px;overflow:hidden"><div class="a" style="left:-1812px;top:-477px;width:1918px;height:860px">
<svg style="left:1825.0px;top:486.600px" width="7.400" height="11.600" viewBox="0 0 8 12"><path d="M4 1.200v9.600M1.200 3.800l2.800-2.800 2.800 2.800M1.200 8.200l2.800 2.800 2.800-2.800" fill="none" stroke="#2fb89a" stroke-width="1.150" stroke-linecap="round" stroke-linejoin="round"/></svg>
<div class="t" style="left:1865.10px;top:485.00px;font-size:13.8px;line-height:19px;letter-spacing:-0.368px;font-weight:700;color:#5a5a5a;">C__15</div>
</div></div>
<svg style="left:17.700px;top:519.0px" width="16" height="16" viewBox="0 0 16 16"><path d="M7.900 .3q.9 0 1.400.9l6 11.300q.8 1.900-1 1.900h-12.800q-1.800 0-1-1.900l6-11.300q.5-.9 1.400-.9z" fill="#dc3545"/><path d="M7.900 4.800v5" stroke="#909090" stroke-width="1.500" stroke-linecap="round"/><circle cx="7.900" cy="12.200" r=".9" fill="#909090"/></svg>
<div class="t" style="left:75.24px;top:518.00px;font-size:11.8px;line-height:17px;font-weight:700;color:#fff;">1</div>
<svg style="left:92.2px;top:521.1px" width="12" height="12" viewBox="0 0 12 12"><circle cx="6" cy="6" r="4.900" fill="none" stroke="#6a6a6a" stroke-width="1.200"/><path d="M6 5.400v3.100" stroke="#5a5a5a" stroke-width="1.250"/><circle cx="6" cy="3.700" r=".75" fill="#5a5a5a"/></svg>
<div class="t" style="left:109.05px;top:520.00px;font-size:10.9px;line-height:15px;color:#222;">6</div>
<svg style="left:239.2px;top:521.1px" width="12" height="12" viewBox="0 0 12 12"><circle cx="6" cy="6" r="4.900" fill="none" stroke="#6a6a6a" stroke-width="1.200"/><path d="M6 5.400v3.100" stroke="#5a5a5a" stroke-width="1.250"/><circle cx="6" cy="3.700" r=".75" fill="#5a5a5a"/></svg>
<div class="t" style="left:256.05px;top:520.00px;font-size:10.9px;line-height:15px;letter-spacing:-0.675px;color:#222;">J.sYzr</div>
<svg style="left:386.2px;top:521.1px" width="12" height="12" viewBox="0 0 12 12"><circle cx="6" cy="6" r="4.900" fill="none" stroke="#6a6a6a" stroke-width="1.200"/><path d="M6 5.400v3.100" stroke="#5a5a5a" stroke-width="1.250"/><circle cx="6" cy="3.700" r=".75" fill="#5a5a5a"/></svg>
<div class="t" style="left:403.05px;top:520.00px;font-size:10.9px;line-height:15px;letter-spacing:-0.073px;color:#222;">802pgFoXQRz0LEDVX...</div>
<svg style="left:534.2px;top:521.1px" width="12" height="12" viewBox="0 0 12 12"><circle cx="6" cy="6" r="4.900" fill="none" stroke="#6a6a6a" stroke-width="1.200"/><path d="M6 5.400v3.100" stroke="#5a5a5a" stroke-width="1.250"/><circle cx="6" cy="3.700" r=".75" fill="#5a5a5a"/></svg>
<div class="t" style="left:551.05px;top:520.00px;font-size:10.9px;line-height:15px;letter-spacing:0.098px;color:#222;">2034-08-12</div>
<div class="t" style="left:722.00px;top:520.00px;font-size:10.9px;line-height:15px;letter-spacing:0.098px;color:#222;">2025-01-29</div>
<svg style="left:786.200px;top:521.1px" width="12" height="12" viewBox="0 0 12 12"><circle cx="6" cy="6" r="4.900" fill="none" stroke="#6a6a6a" stroke-width="1.200"/><path d="M6 5.400v3.100" stroke="#5a5a5a" stroke-width="1.250"/><circle cx="6" cy="3.700" r=".75" fill="#5a5a5a"/></svg>
<svg style="left:800.700px;top:520.7px" width="10" height="12" viewBox="0 0 10 12"><path d="M.9 1.700h7.600v9.400h-7.600z" fill="none" stroke="#333" stroke-width=".9"/><path d="M2 .3v1.400M4.600 .3v1.400M7.200 .3v1.400" stroke="#333" stroke-width=".9"/><path d="M4.700 5.200v3.600M3.700 5.200h1M3.600 8.900h2.300" stroke="#222" stroke-width="1" fill="none"/><circle cx="4.700" cy="3.600" r=".65" fill="#222"/></svg>
<div class="t" style="left:869.00px;top:520.00px;font-size:10.9px;line-height:15px;letter-spacing:0.098px;color:#222;">2025-02-02</div>
<svg style="left:933.2px;top:521.1px" width="12" height="12" viewBox="0 0 12 12"><circle cx="6" cy="6" r="4.900" fill="none" stroke="#6a6a6a" stroke-width="1.200"/><path d="M6 5.400v3.100" stroke="#5a5a5a" stroke-width="1.250"/><circle cx="6" cy="3.700" r=".75" fill="#5a5a5a"/></svg>
<div class="t" style="left:950.05px;top:520.00px;font-size:10.9px;line-height:15px;color:#222;">2</div>
<svg style="left:1081.2px;top:521.1px" width="12" height="12" viewBox="0 0 12 12"><circle cx="6" cy="6" r="4.900" fill="none" stroke="#6a6a6a" stroke-width="1.200"/><path d="M6 5.400v3.100" stroke="#5a5a5a" stroke-width="1.250"/><circle cx="6" cy="3.700" r=".75" fill="#5a5a5a"/></svg>
<div class="t" style="left:1098.05px;top:520.00px;font-size:10.9px;line-height:15px;letter-spacing:0.352px;color:#222;">122</div>
<svg style="left:1228.2px;top:521.1px" width="12" height="12" viewBox="0 0 12 12"><circle cx="6" cy="6" r="4.900" fill="none" stroke="#6a6a6a" stroke-width="1.200"/><path d="M6 5.400v3.100" stroke="#5a5a5a" stroke-width="1.250"/><circle cx="6" cy="3.700" r=".75" fill="#5a5a5a"/></svg>
<div class="t" style="left:1245.05px;top:520.00px;font-size:10.9px;line-height:15px;letter-spacing:0.290px;color:#222;">Текстовая строка</div>
<svg style="left:1375.2px;top:521.1px" width="12" height="12" viewBox="0 0 12 12"><circle cx="6" cy="6" r="4.900" fill="none" stroke="#6a6a6a" stroke-width="1.200"/><path d="M6 5.400v3.100" stroke="#5a5a5a" stroke-width="1.250"/><circle cx="6" cy="3.700" r=".75" fill="#5a5a5a"/></svg>
<div class="t" style="left:1392.05px;top:520.00px;font-size:10.9px;line-height:15px;color:#222;">0</div>
<svg style="left:1523.2px;top:521.1px" width="12" height="12" viewBox="0 0 12 12"><circle cx="6" cy="6" r="4.900" fill="none" stroke="#6a6a6a" stroke-width="1.200"/><path d="M6 5.400v3.100" stroke="#5a5a5a" stroke-width="1.250"/><circle cx="6" cy="3.700" r=".75" fill="#5a5a5a"/></svg>
<div class="t" style="left:1540.05px;top:520.00px;font-size:10.9px;line-height:15px;color:#222;">1</div>
<svg style="left:1670.2px;top:521.1px" width="12" height="12" viewBox="0 0 12 12"><circle cx="6" cy="6" r="4.900" fill="none" stroke="#6a6a6a" stroke-width="1.200"/><path d="M6 5.400v3.100" stroke="#5a5a5a" stroke-width="1.250"/><circle cx="6" cy="3.700" r=".75" fill="#5a5a5a"/></svg>
<div class="t" style="left:1687.05px;top:520.00px;font-size:10.9px;line-height:15px;color:#222;">0</div>
<svg style="left:1818.2px;top:521.1px" width="12" height="12" viewBox="0 0 12 12"><circle cx="6" cy="6" r="4.900" fill="none" stroke="#6a6a6a" stroke-width="1.200"/><path d="M6 5.400v3.100" stroke="#5a5a5a" stroke-width="1.250"/><circle cx="6" cy="3.700" r=".75" fill="#5a5a5a"/></svg>
<div class="t" style="left:1835.05px;top:520.00px;font-size:10.9px;line-height:15px;color:#222;">0</div>
<svg style="left:17.700px;top:549.0px" width="16" height="16" viewBox="0 0 16 16"><path d="M7.900 .3q.9 0 1.400.9l6 11.300q.8 1.900-1 1.900h-12.800q-1.800 0-1-1.900l6-11.300q.5-.9 1.400-.9z" fill="#dc3545"/><path d="M7.900 4.800v5" stroke="#909090" stroke-width="1.500" stroke-linecap="round"/><circle cx="7.900" cy="12.200" r=".9" fill="#909090"/></svg>
<div class="t" style="left:75.24px;top:548.00px;font-size:11.8px;line-height:17px;font-weight:700;color:#fff;">2</div>
<svg style="left:92.2px;top:551.1px" width="12" height="12" viewBox="0 0 12 12"><circle cx="6" cy="6" r="4.900" fill="none" stroke="#6a6a6a" stroke-width="1.200"/><path d="M6 5.400v3.100" stroke="#5a5a5a" stroke-width="1.250"/><circle cx="6" cy="3.700" r=".75" fill="#5a5a5a"/></svg>
<div class="t" style="left:109.05px;top:550.00px;font-size:10.9px;line-height:15px;color:#222;">n</div>
<svg style="left:239.2px;top:551.1px" width="12" height="12" viewBox="0 0 12 12"><circle cx="6" cy="6" r="4.900" fill="none" stroke="#6a6a6a" stroke-width="1.200"/><path d="M6 5.400v3.100" stroke="#5a5a5a" stroke-width="1.250"/><circle cx="6" cy="3.700" r=".75" fill="#5a5a5a"/></svg>
<div class="t" style="left:256.05px;top:550.00px;font-size:10.9px;line-height:15px;letter-spacing:0.008px;color:#222;">IB0Tq f4G1GbeNl9EK...</div>
<svg style="left:386.2px;top:551.1px" width="12" height="12" viewBox="0 0 12 12"><circle cx="6" cy="6" r="4.900" fill="none" stroke="#6a6a6a" stroke-width="1.200"/><path d="M6 5.400v3.100" stroke="#5a5a5a" stroke-width="1.250"/><circle cx="6" cy="3.700" r=".75" fill="#5a5a5a"/></svg>
<div class="t" style="left:403.05px;top:550.00px;font-size:10.9px;line-height:15px;letter-spacing:0.641px;color:#222;">Gm</div>
<svg style="left:534.2px;top:551.1px" width="12" height="12" viewBox="0 0 12 12"><circle cx="6" cy="6" r="4.900" fill="none" stroke="#6a6a6a" stroke-width="1.200"/><path d="M6 5.400v3.100" stroke="#5a5a5a" stroke-width="1.250"/><circle cx="6" cy="3.700" r=".75" fill="#5a5a5a"/></svg>
<div class="t" style="left:551.05px;top:550.00px;font-size:10.9px;line-height:15px;letter-spacing:0.098px;color:#222;">2061-12-31</div>
<div class="t" style="left:722.00px;top:550.00px;font-size:10.9px;line-height:15px;letter-spacing:0.188px;color:#222;">2024-11-17</div>
<svg style="left:786.200px;top:551.1px" width="12" height="12" viewBox="0 0 12 12"><circle cx="6" cy="6" r="4.900" fill="none" stroke="#6a6a6a" stroke-width="1.200"/><path d="M6 5.400v3.100" stroke="#5a5a5a" stroke-width="1.250"/><circle cx="6" cy="3.700" r=".75" fill="#5a5a5a"/></svg>
<svg style="left:800.700px;top:550.7px" width="10" height="12" viewBox="0 0 10 12"><path d="M.9 1.700h7.600v9.400h-7.600z" fill="none" stroke="#333" stroke-width=".9"/><path d="M2 .3v1.400M4.600 .3v1.400M7.200 .3v1.400" stroke="#333" stroke-width=".9"/><path d="M4.700 5.200v3.600M3.700 5.200h1M3.600 8.900h2.300" stroke="#222" stroke-width="1" fill="none"/><circle cx="4.700" cy="3.600" r=".65" fill="#222"/></svg>
<div class="t" style="left:869.00px;top:550.00px;font-size:10.9px;line-height:15px;letter-spacing:0.098px;color:#222;">2024-10-01</div>
<svg style="left:933.2px;top:551.1px" width="12" height="12" viewBox="0 0 12 12"><circle cx="6" cy="6" r="4.900" fill="none" stroke="#6a6a6a" stroke-width="1.200"/><path d="M6 5.400v3.100" stroke="#5a5a5a" stroke-width="1.250"/><circle cx="6" cy="3.700" r=".75" fill="#5a5a5a"/></svg>
<div class="t" style="left:950.05px;top:550.00px;font-size:10.9px;line-height:15px;color:#222;">2</div>
<svg style="left:1081.2px;top:551.1px" width="12" height="12" viewBox="0 0 12 12"><circle cx="6" cy="6" r="4.900" fill="none" stroke="#6a6a6a" stroke-width="1.200"/><path d="M6 5.400v3.100" stroke="#5a5a5a" stroke-width="1.250"/><circle cx="6" cy="3.700" r=".75" fill="#5a5a5a"/></svg>
<div class="t" style="left:1098.05px;top:550.00px;font-size:10.9px;line-height:15px;letter-spacing:0.352px;color:#222;">122</div>
<svg style="left:1228.2px;top:551.1px" width="12" height="12" viewBox="0 0 12 12"><circle cx="6" cy="6" r="4.900" fill="none" stroke="#6a6a6a" stroke-width="1.200"/><path d="M6 5.400v3.100" stroke="#5a5a5a" stroke-width="1.250"/><circle cx="6" cy="3.700" r=".75" fill="#5a5a5a"/></svg>
<div class="t" style="left:1245.05px;top:550.00px;font-size:10.9px;line-height:15px;letter-spacing:0.290px;color:#222;">Текстовая строка</div>
<svg style="left:1375.2px;top:551.1px" width="12" height="12" viewBox="0 0 12 12"><circle cx="6" cy="6" r="4.900" fill="none" stroke="#6a6a6a" stroke-width="1.200"/><path d="M6 5.400v3.100" stroke="#5a5a5a" stroke-width="1.250"/><circle cx="6" cy="3.700" r=".75" fill="#5a5a5a"/></svg>
<div class="t" style="left:1392.05px;top:550.00px;font-size:10.9px;line-height:15px;color:#222;">2</div>
<svg style="left:1523.2px;top:551.1px" width="12" height="12" viewBox="0 0 12 12"><circle cx="6" cy="6" r="4.900" fill="none" stroke="#6a6a6a" stroke-width="1.200"/><path d="M6 5.400v3.100" stroke="#5a5a5a" stroke-width="1.250"/><circle cx="6" cy="3.700" r=".75" fill="#5a5a5a"/></svg>
<div class="t" style="left:1540.05px;top:550.00px;font-size:10.9px;line-height:15px;color:#222;">9</div>
<svg style="left:1670.2px;top:551.1px" width="12" height="12" viewBox="0 0 12 12"><circle cx="6" cy="6" r="4.900" fill="none" stroke="#6a6a6a" stroke-width="1.200"/><path d="M6 5.400v3.100" stroke="#5a5a5a" stroke-width="1.250"/><circle cx="6" cy="3.700" r=".75" fill="#5a5a5a"/></svg>
<div class="t" style="left:1687.05px;top:550.00px;font-size:10.9px;line-height:15px;color:#222;">0</div>
<svg style="left:1818.2px;top:551.1px" width="12" height="12" viewBox="0 0 12 12"><circle cx="6" cy="6" r="4.900" fill="none" stroke="#6a6a6a" stroke-width="1.200"/><path d="M6 5.400v3.100" stroke="#5a5a5a" stroke-width="1.250"/><circle cx="6" cy="3.700" r=".75" fill="#5a5a5a"/></svg>
<div class="t" style="left:1835.05px;top:550.00px;font-size:10.9px;line-height:15px;color:#222;">9</div>
<svg style="left:17.700px;top:580.0px" width="16" height="16" viewBox="0 0 16 16"><path d="M7.900 .3q.9 0 1.400.9l6 11.300q.8 1.900-1 1.900h-12.800q-1.800 0-1-1.900l6-11.300q.5-.9 1.400-.9z" fill="#dc3545"/><path d="M7.900 4.800v5" stroke="#909090" stroke-width="1.500" stroke-linecap="round"/><circle cx="7.900" cy="12.200" r=".9" fill="#909090"/></svg>
<div class="t" style="left:75.24px;top:579.00px;font-size:11.8px;line-height:17px;font-weight:700;color:#fff;">3</div>
<svg style="left:92.2px;top:582.1px" width="12" height="12" viewBox="0 0 12 12"><circle cx="6" cy="6" r="4.900" fill="none" stroke="#6a6a6a" stroke-width="1.200"/><path d="M6 5.400v3.100" stroke="#5a5a5a" stroke-width="1.250"/><circle cx="6" cy="3.700" r=".75" fill="#5a5a5a"/></svg>
<div class="t" style="left:109.05px;top:581.00px;font-size:10.9px;line-height:15px;letter-spacing:0.125px;color:#222;">-EUfqmRslUMtztJsjGv...</div>
<svg style="left:239.2px;top:582.1px" width="12" height="12" viewBox="0 0 12 12"><circle cx="6" cy="6" r="4.900" fill="none" stroke="#6a6a6a" stroke-width="1.200"/><path d="M6 5.400v3.100" stroke="#5a5a5a" stroke-width="1.250"/><circle cx="6" cy="3.700" r=".75" fill="#5a5a5a"/></svg>
<div class="t" style="left:256.05px;top:581.00px;font-size:10.9px;line-height:15px;letter-spacing:0.119px;color:#222;">s6bzpdOZSkrIMz.Jdla...</div>
<svg style="left:386.2px;top:582.1px" width="12" height="12" viewBox="0 0 12 12"><circle cx="6" cy="6" r="4.900" fill="none" stroke="#6a6a6a" stroke-width="1.200"/><path d="M6 5.400v3.100" stroke="#5a5a5a" stroke-width="1.250"/><circle cx="6" cy="3.700" r=".75" fill="#5a5a5a"/></svg>
<div class="t" style="left:403.05px;top:581.00px;font-size:10.9px;line-height:15px;color:#222;">5</div>
<svg style="left:534.2px;top:582.1px" width="12" height="12" viewBox="0 0 12 12"><circle cx="6" cy="6" r="4.900" fill="none" stroke="#6a6a6a" stroke-width="1.200"/><path d="M6 5.400v3.100" stroke="#5a5a5a" stroke-width="1.250"/><circle cx="6" cy="3.700" r=".75" fill="#5a5a5a"/></svg>
<div class="t" style="left:551.05px;top:581.00px;font-size:10.9px;line-height:15px;letter-spacing:0.098px;color:#222;">2059-07-07</div>
<div class="t" style="left:722.00px;top:581.00px;font-size:10.9px;line-height:15px;letter-spacing:0.098px;color:#222;">2024-12-15</div>
<svg style="left:786.200px;top:582.1px" width="12" height="12" viewBox="0 0 12 12"><circle cx="6" cy="6" r="4.900" fill="none" stroke="#6a6a6a" stroke-width="1.200"/><path d="M6 5.400v3.100" stroke="#5a5a5a" stroke-width="1.250"/><circle cx="6" cy="3.700" r=".75" fill="#5a5a5a"/></svg>
<svg style="left:800.700px;top:581.7px" width="10" height="12" viewBox="0 0 10 12"><path d="M.9 1.700h7.600v9.400h-7.600z" fill="none" stroke="#333" stroke-width=".9"/><path d="M2 .3v1.400M4.600 .3v1.400M7.200 .3v1.400" stroke="#333" stroke-width=".9"/><path d="M4.700 5.200v3.600M3.700 5.200h1M3.600 8.900h2.300" stroke="#222" stroke-width="1" fill="none"/><circle cx="4.700" cy="3.600" r=".65" fill="#222"/></svg>
<div class="t" style="left:869.00px;top:581.00px;font-size:10.9px;line-height:15px;letter-spacing:0.098px;color:#222;">2025-06-08</div>
<svg style="left:933.2px;top:582.1px" width="12" height="12" viewBox="0 0 12 12"><circle cx="6" cy="6" r="4.900" fill="none" stroke="#6a6a6a" stroke-width="1.200"/><path d="M6 5.400v3.100" stroke="#5a5a5a" stroke-width="1.250"/><circle cx="6" cy="3.700" r=".75" fill="#5a5a5a"/></svg>
<div class="t" style="left:950.05px;top:581.00px;font-size:10.9px;line-height:15px;color:#222;">1</div>
<svg style="left:1081.2px;top:582.1px" width="12" height="12" viewBox="0 0 12 12"><circle cx="6" cy="6" r="4.900" fill="none" stroke="#6a6a6a" stroke-width="1.200"/><path d="M6 5.400v3.100" stroke="#5a5a5a" stroke-width="1.250"/><circle cx="6" cy="3.700" r=".75" fill="#5a5a5a"/></svg>
<div class="t" style="left:1098.05px;top:581.00px;font-size:10.9px;line-height:15px;letter-spacing:0.352px;color:#222;">122</div>
<svg style="left:1228.2px;top:582.1px" width="12" height="12" viewBox="0 0 12 12"><circle cx="6" cy="6" r="4.900" fill="none" stroke="#6a6a6a" stroke-width="1.200"/><path d="M6 5.400v3.100" stroke="#5a5a5a" stroke-width="1.250"/><circle cx="6" cy="3.700" r=".75" fill="#5a5a5a"/></svg>
<div class="t" style="left:1245.05px;top:581.00px;font-size:10.9px;line-height:15px;letter-spacing:0.290px;color:#222;">Текстовая строка</div>
<svg style="left:1375.2px;top:582.1px" width="12" height="12" viewBox="0 0 12 12"><circle cx="6" cy="6" r="4.900" fill="none" stroke="#6a6a6a" stroke-width="1.200"/><path d="M6 5.400v3.100" stroke="#5a5a5a" stroke-width="1.250"/><circle cx="6" cy="3.700" r=".75" fill="#5a5a5a"/></svg>
<div class="t" style="left:1392.05px;top:581.00px;font-size:10.9px;line-height:15px;color:#222;">3</div>
<svg style="left:1523.2px;top:582.1px" width="12" height="12" viewBox="0 0 12 12"><circle cx="6" cy="6" r="4.900" fill="none" stroke="#6a6a6a" stroke-width="1.200"/><path d="M6 5.400v3.100" stroke="#5a5a5a" stroke-width="1.250"/><circle cx="6" cy="3.700" r=".75" fill="#5a5a5a"/></svg>
<div class="t" style="left:1540.05px;top:581.00px;font-size:10.9px;line-height:15px;color:#222;">1</div>
<svg style="left:1670.2px;top:582.1px" width="12" height="12" viewBox="0 0 12 12"><circle cx="6" cy="6" r="4.900" fill="none" stroke="#6a6a6a" stroke-width="1.200"/><path d="M6 5.400v3.100" stroke="#5a5a5a" stroke-width="1.250"/><circle cx="6" cy="3.700" r=".75" fill="#5a5a5a"/></svg>
<div class="t" style="left:1687.05px;top:581.00px;font-size:10.9px;line-height:15px;color:#222;">9</div>
<svg style="left:1818.2px;top:582.1px" width="12" height="12" viewBox="0 0 12 12"><circle cx="6" cy="6" r="4.900" fill="none" stroke="#6a6a6a" stroke-width="1.200"/><path d="M6 5.400v3.100" stroke="#5a5a5a" stroke-width="1.250"/><circle cx="6" cy="3.700" r=".75" fill="#5a5a5a"/></svg>
<div class="t" style="left:1835.05px;top:581.00px;font-size:10.9px;line-height:15px;color:#222;">1</div>
<svg style="left:17.700px;top:610.0px" width="16" height="16" viewBox="0 0 16 16"><path d="M7.900 .3q.9 0 1.400.9l6 11.300q.8 1.900-1 1.900h-12.800q-1.800 0-1-1.900l6-11.300q.5-.9 1.400-.9z" fill="#dc3545"/><path d="M7.900 4.800v5" stroke="#909090" stroke-width="1.500" stroke-linecap="round"/><circle cx="7.900" cy="12.200" r=".9" fill="#909090"/></svg>
<div class="t" style="left:75.24px;top:609.00px;font-size:11.8px;line-height:17px;font-weight:700;color:#fff;">4</div>
<svg style="left:92.2px;top:612.1px" width="12" height="12" viewBox="0 0 12 12"><circle cx="6" cy="6" r="4.900" fill="none" stroke="#6a6a6a" stroke-width="1.200"/><path d="M6 5.400v3.100" stroke="#5a5a5a" stroke-width="1.250"/><circle cx="6" cy="3.700" r=".75" fill="#5a5a5a"/></svg>
<div class="t" style="left:109.05px;top:611.00px;font-size:10.9px;line-height:15px;color:#222;">K</div>
<svg style="left:239.2px;top:612.1px" width="12" height="12" viewBox="0 0 12 12"><circle cx="6" cy="6" r="4.900" fill="none" stroke="#6a6a6a" stroke-width="1.200"/><path d="M6 5.400v3.100" stroke="#5a5a5a" stroke-width="1.250"/><circle cx="6" cy="3.700" r=".75" fill="#5a5a5a"/></svg>
<div class="t" style="left:256.05px;top:611.00px;font-size:10.9px;line-height:15px;letter-spacing:0.178px;color:#222;">GGh3uVGUrpX0U7tz...</div>
<svg style="left:386.2px;top:612.1px" width="12" height="12" viewBox="0 0 12 12"><circle cx="6" cy="6" r="4.900" fill="none" stroke="#6a6a6a" stroke-width="1.200"/><path d="M6 5.400v3.100" stroke="#5a5a5a" stroke-width="1.250"/><circle cx="6" cy="3.700" r=".75" fill="#5a5a5a"/></svg>
<div class="t" style="left:403.05px;top:611.00px;font-size:10.9px;line-height:15px;color:#222;">r</div>
<svg style="left:534.2px;top:612.1px" width="12" height="12" viewBox="0 0 12 12"><circle cx="6" cy="6" r="4.900" fill="none" stroke="#6a6a6a" stroke-width="1.200"/><path d="M6 5.400v3.100" stroke="#5a5a5a" stroke-width="1.250"/><circle cx="6" cy="3.700" r=".75" fill="#5a5a5a"/></svg>
<div class="t" style="left:551.05px;top:611.00px;font-size:10.9px;line-height:15px;letter-spacing:0.098px;color:#222;">2090-09-16</div>
<div class="t" style="left:722.00px;top:611.00px;font-size:10.9px;line-height:15px;letter-spacing:0.098px;color:#222;">2025-01-29</div>
<svg style="left:786.200px;top:612.1px" width="12" height="12" viewBox="0 0 12 12"><circle cx="6" cy="6" r="4.900" fill="none" stroke="#6a6a6a" stroke-width="1.200"/><path d="M6 5.400v3.100" stroke="#5a5a5a" stroke-width="1.250"/><circle cx="6" cy="3.700" r=".75" fill="#5a5a5a"/></svg>
<svg style="left:800.700px;top:611.7px" width="10" height="12" viewBox="0 0 10 12"><path d="M.9 1.700h7.600v9.400h-7.600z" fill="none" stroke="#333" stroke-width=".9"/><path d="M2 .3v1.400M4.600 .3v1.400M7.200 .3v1.400" stroke="#333" stroke-width=".9"/><path d="M4.700 5.200v3.600M3.700 5.200h1M3.600 8.900h2.300" stroke="#222" stroke-width="1" fill="none"/><circle cx="4.700" cy="3.600" r=".65" fill="#222"/></svg>
<div class="t" style="left:869.00px;top:611.00px;font-size:10.9px;line-height:15px;letter-spacing:0.098px;color:#222;">2024-10-01</div>
<svg style="left:933.2px;top:612.1px" width="12" height="12" viewBox="0 0 12 12"><circle cx="6" cy="6" r="4.900" fill="none" stroke="#6a6a6a" stroke-width="1.200"/><path d="M6 5.400v3.100" stroke="#5a5a5a" stroke-width="1.250"/><circle cx="6" cy="3.700" r=".75" fill="#5a5a5a"/></svg>
<div class="t" style="left:950.05px;top:611.00px;font-size:10.9px;line-height:15px;color:#222;">2</div>
<svg style="left:1081.2px;top:612.1px" width="12" height="12" viewBox="0 0 12 12"><circle cx="6" cy="6" r="4.900" fill="none" stroke="#6a6a6a" stroke-width="1.200"/><path d="M6 5.400v3.100" stroke="#5a5a5a" stroke-width="1.250"/><circle cx="6" cy="3.700" r=".75" fill="#5a5a5a"/></svg>
<div class="t" style="left:1098.05px;top:611.00px;font-size:10.9px;line-height:15px;letter-spacing:0.352px;color:#222;">201</div>
<svg style="left:1228.2px;top:612.1px" width="12" height="12" viewBox="0 0 12 12"><circle cx="6" cy="6" r="4.900" fill="none" stroke="#6a6a6a" stroke-width="1.200"/><path d="M6 5.400v3.100" stroke="#5a5a5a" stroke-width="1.250"/><circle cx="6" cy="3.700" r=".75" fill="#5a5a5a"/></svg>
<div class="t" style="left:1245.05px;top:611.00px;font-size:10.9px;line-height:15px;letter-spacing:0.290px;color:#222;">Текстовая строка</div>
<svg style="left:1375.2px;top:612.1px" width="12" height="12" viewBox="0 0 12 12"><circle cx="6" cy="6" r="4.900" fill="none" stroke="#6a6a6a" stroke-width="1.200"/><path d="M6 5.400v3.100" stroke="#5a5a5a" stroke-width="1.250"/><circle cx="6" cy="3.700" r=".75" fill="#5a5a5a"/></svg>
<div class="t" style="left:1392.05px;top:611.00px;font-size:10.9px;line-height:15px;color:#222;">1</div>
<svg style="left:1523.2px;top:612.1px" width="12" height="12" viewBox="0 0 12 12"><circle cx="6" cy="6" r="4.900" fill="none" stroke="#6a6a6a" stroke-width="1.200"/><path d="M6 5.400v3.100" stroke="#5a5a5a" stroke-width="1.250"/><circle cx="6" cy="3.700" r=".75" fill="#5a5a5a"/></svg>
<div class="t" style="left:1540.05px;top:611.00px;font-size:10.9px;line-height:15px;color:#222;">0</div>
<svg style="left:1670.2px;top:612.1px" width="12" height="12" viewBox="0 0 12 12"><circle cx="6" cy="6" r="4.900" fill="none" stroke="#6a6a6a" stroke-width="1.200"/><path d="M6 5.400v3.100" stroke="#5a5a5a" stroke-width="1.250"/><circle cx="6" cy="3.700" r=".75" fill="#5a5a5a"/></svg>
<div class="t" style="left:1687.05px;top:611.00px;font-size:10.9px;line-height:15px;color:#222;">9</div>
<svg style="left:1818.2px;top:612.1px" width="12" height="12" viewBox="0 0 12 12"><circle cx="6" cy="6" r="4.900" fill="none" stroke="#6a6a6a" stroke-width="1.200"/><path d="M6 5.400v3.100" stroke="#5a5a5a" stroke-width="1.250"/><circle cx="6" cy="3.700" r=".75" fill="#5a5a5a"/></svg>
<div class="t" style="left:1835.05px;top:611.00px;font-size:10.9px;line-height:15px;color:#222;">1</div>
<svg style="left:17.700px;top:640.0px" width="16" height="16" viewBox="0 0 16 16"><path d="M7.900 .3q.9 0 1.400.9l6 11.300q.8 1.900-1 1.900h-12.800q-1.800 0-1-1.900l6-11.300q.5-.9 1.400-.9z" fill="#dc3545"/><path d="M7.900 4.800v5" stroke="#909090" stroke-width="1.500" stroke-linecap="round"/><circle cx="7.900" cy="12.200" r=".9" fill="#909090"/></svg>
<div class="t" style="left:75.24px;top:639.00px;font-size:11.8px;line-height:17px;font-weight:700;color:#fff;">5</div>
<svg style="left:92.2px;top:642.1px" width="12" height="12" viewBox="0 0 12 12"><circle cx="6" cy="6" r="4.900" fill="none" stroke="#6a6a6a" stroke-width="1.200"/><path d="M6 5.400v3.100" stroke="#5a5a5a" stroke-width="1.250"/><circle cx="6" cy="3.700" r=".75" fill="#5a5a5a"/></svg>
<div class="t" style="left:109.05px;top:641.00px;font-size:10.9px;line-height:15px;color:#222;">B</div>
<svg style="left:239.2px;top:642.1px" width="12" height="12" viewBox="0 0 12 12"><circle cx="6" cy="6" r="4.900" fill="none" stroke="#6a6a6a" stroke-width="1.200"/><path d="M6 5.400v3.100" stroke="#5a5a5a" stroke-width="1.250"/><circle cx="6" cy="3.700" r=".75" fill="#5a5a5a"/></svg>
<div class="t" style="left:256.05px;top:641.00px;font-size:10.9px;line-height:15px;color:#222;">A</div>
<svg style="left:386.2px;top:642.1px" width="12" height="12" viewBox="0 0 12 12"><circle cx="6" cy="6" r="4.900" fill="none" stroke="#6a6a6a" stroke-width="1.200"/><path d="M6 5.400v3.100" stroke="#5a5a5a" stroke-width="1.250"/><circle cx="6" cy="3.700" r=".75" fill="#5a5a5a"/></svg>
<div class="t" style="left:403.05px;top:641.00px;font-size:10.9px;line-height:15px;color:#222;">8</div>
<svg style="left:534.2px;top:642.1px" width="12" height="12" viewBox="0 0 12 12"><circle cx="6" cy="6" r="4.900" fill="none" stroke="#6a6a6a" stroke-width="1.200"/><path d="M6 5.400v3.100" stroke="#5a5a5a" stroke-width="1.250"/><circle cx="6" cy="3.700" r=".75" fill="#5a5a5a"/></svg>
<div class="t" style="left:551.05px;top:641.00px;font-size:10.9px;line-height:15px;letter-spacing:0.098px;color:#222;">2081-10-19</div>
<div class="t" style="left:722.00px;top:641.00px;font-size:10.9px;line-height:15px;letter-spacing:0.098px;color:#222;">2025-02-26</div>
<svg style="left:786.200px;top:642.1px" width="12" height="12" viewBox="0 0 12 12"><circle cx="6" cy="6" r="4.900" fill="none" stroke="#6a6a6a" stroke-width="1.200"/><path d="M6 5.400v3.100" stroke="#5a5a5a" stroke-width="1.250"/><circle cx="6" cy="3.700" r=".75" fill="#5a5a5a"/></svg>
<svg style="left:800.700px;top:641.7px" width="10" height="12" viewBox="0 0 10 12"><path d="M.9 1.700h7.600v9.400h-7.600z" fill="none" stroke="#333" stroke-width=".9"/><path d="M2 .3v1.400M4.600 .3v1.400M7.200 .3v1.400" stroke="#333" stroke-width=".9"/><path d="M4.700 5.200v3.600M3.700 5.200h1M3.600 8.900h2.300" stroke="#222" stroke-width="1" fill="none"/><circle cx="4.700" cy="3.600" r=".65" fill="#222"/></svg>
<div class="t" style="left:869.00px;top:641.00px;font-size:10.9px;line-height:15px;letter-spacing:0.188px;color:#222;">2024-11-17</div>
<svg style="left:933.2px;top:642.1px" width="12" height="12" viewBox="0 0 12 12"><circle cx="6" cy="6" r="4.900" fill="none" stroke="#6a6a6a" stroke-width="1.200"/><path d="M6 5.400v3.100" stroke="#5a5a5a" stroke-width="1.250"/><circle cx="6" cy="3.700" r=".75" fill="#5a5a5a"/></svg>
<div class="t" style="left:950.05px;top:641.00px;font-size:10.9px;line-height:15px;color:#222;">2</div>
<svg style="left:1081.2px;top:642.1px" width="12" height="12" viewBox="0 0 12 12"><circle cx="6" cy="6" r="4.900" fill="none" stroke="#6a6a6a" stroke-width="1.200"/><path d="M6 5.400v3.100" stroke="#5a5a5a" stroke-width="1.250"/><circle cx="6" cy="3.700" r=".75" fill="#5a5a5a"/></svg>
<div class="t" style="left:1098.05px;top:641.00px;font-size:10.9px;line-height:15px;letter-spacing:0.750px;color:#222;">112</div>
<svg style="left:1228.2px;top:642.1px" width="12" height="12" viewBox="0 0 12 12"><circle cx="6" cy="6" r="4.900" fill="none" stroke="#6a6a6a" stroke-width="1.200"/><path d="M6 5.400v3.100" stroke="#5a5a5a" stroke-width="1.250"/><circle cx="6" cy="3.700" r=".75" fill="#5a5a5a"/></svg>
<div class="t" style="left:1245.05px;top:641.00px;font-size:10.9px;line-height:15px;letter-spacing:0.290px;color:#222;">Текстовая строка</div>
<svg style="left:1375.2px;top:642.1px" width="12" height="12" viewBox="0 0 12 12"><circle cx="6" cy="6" r="4.900" fill="none" stroke="#6a6a6a" stroke-width="1.200"/><path d="M6 5.400v3.100" stroke="#5a5a5a" stroke-width="1.250"/><circle cx="6" cy="3.700" r=".75" fill="#5a5a5a"/></svg>
<div class="t" style="left:1392.05px;top:641.00px;font-size:10.9px;line-height:15px;color:#222;">1</div>
<svg style="left:1523.2px;top:642.1px" width="12" height="12" viewBox="0 0 12 12"><circle cx="6" cy="6" r="4.900" fill="none" stroke="#6a6a6a" stroke-width="1.200"/><path d="M6 5.400v3.100" stroke="#5a5a5a" stroke-width="1.250"/><circle cx="6" cy="3.700" r=".75" fill="#5a5a5a"/></svg>
<div class="t" style="left:1540.05px;top:641.00px;font-size:10.9px;line-height:15px;color:#222;">9</div>
<svg style="left:1670.2px;top:642.1px" width="12" height="12" viewBox="0 0 12 12"><circle cx="6" cy="6" r="4.900" fill="none" stroke="#6a6a6a" stroke-width="1.200"/><path d="M6 5.400v3.100" stroke="#5a5a5a" stroke-width="1.250"/><circle cx="6" cy="3.700" r=".75" fill="#5a5a5a"/></svg>
<div class="t" style="left:1687.05px;top:641.00px;font-size:10.9px;line-height:15px;color:#222;">9</div>
<svg style="left:1818.2px;top:642.1px" width="12" height="12" viewBox="0 0 12 12"><circle cx="6" cy="6" r="4.900" fill="none" stroke="#6a6a6a" stroke-width="1.200"/><path d="M6 5.400v3.100" stroke="#5a5a5a" stroke-width="1.250"/><circle cx="6" cy="3.700" r=".75" fill="#5a5a5a"/></svg>
<div class="t" style="left:1835.05px;top:641.00px;font-size:10.9px;line-height:15px;color:#222;">1</div>
<svg style="left:17.700px;top:670.0px" width="16" height="16" viewBox="0 0 16 16"><path d="M7.900 .3q.9 0 1.400.9l6 11.300q.8 1.900-1 1.900h-12.800q-1.800 0-1-1.900l6-11.300q.5-.9 1.400-.9z" fill="#dc3545"/><path d="M7.900 4.800v5" stroke="#909090" stroke-width="1.500" stroke-linecap="round"/><circle cx="7.900" cy="12.200" r=".9" fill="#909090"/></svg>
<div class="t" style="left:75.24px;top:669.00px;font-size:11.8px;line-height:17px;font-weight:700;color:#fff;">6</div>
<svg style="left:92.2px;top:672.1px" width="12" height="12" viewBox="0 0 12 12"><circle cx="6" cy="6" r="4.900" fill="none" stroke="#6a6a6a" stroke-width="1.200"/><path d="M6 5.400v3.100" stroke="#5a5a5a" stroke-width="1.250"/><circle cx="6" cy="3.700" r=".75" fill="#5a5a5a"/></svg>
<div class="t" style="left:109.05px;top:671.00px;font-size:10.9px;line-height:15px;color:#222;">O</div>
<svg style="left:239.2px;top:672.1px" width="12" height="12" viewBox="0 0 12 12"><circle cx="6" cy="6" r="4.900" fill="none" stroke="#6a6a6a" stroke-width="1.200"/><path d="M6 5.400v3.100" stroke="#5a5a5a" stroke-width="1.250"/><circle cx="6" cy="3.700" r=".75" fill="#5a5a5a"/></svg>
<div class="t" style="left:256.05px;top:671.00px;font-size:10.9px;line-height:15px;color:#222;">B</div>
<svg style="left:386.2px;top:672.1px" width="12" height="12" viewBox="0 0 12 12"><circle cx="6" cy="6" r="4.900" fill="none" stroke="#6a6a6a" stroke-width="1.200"/><path d="M6 5.400v3.100" stroke="#5a5a5a" stroke-width="1.250"/><circle cx="6" cy="3.700" r=".75" fill="#5a5a5a"/></svg>
<div class="t" style="left:403.05px;top:671.00px;font-size:10.9px;line-height:15px;color:#222;">H</div>
<svg style="left:534.2px;top:672.1px" width="12" height="12" viewBox="0 0 12 12"><circle cx="6" cy="6" r="4.900" fill="none" stroke="#6a6a6a" stroke-width="1.200"/><path d="M6 5.400v3.100" stroke="#5a5a5a" stroke-width="1.250"/><circle cx="6" cy="3.700" r=".75" fill="#5a5a5a"/></svg>
<div class="t" style="left:551.05px;top:671.00px;font-size:10.9px;line-height:15px;letter-spacing:0.098px;color:#222;">2028-03-14</div>
<div class="t" style="left:722.00px;top:671.00px;font-size:10.9px;line-height:15px;letter-spacing:0.098px;color:#222;">2025-04-13</div>
<svg style="left:786.200px;top:672.1px" width="12" height="12" viewBox="0 0 12 12"><circle cx="6" cy="6" r="4.900" fill="none" stroke="#6a6a6a" stroke-width="1.200"/><path d="M6 5.400v3.100" stroke="#5a5a5a" stroke-width="1.250"/><circle cx="6" cy="3.700" r=".75" fill="#5a5a5a"/></svg>
<svg style="left:800.700px;top:671.7px" width="10" height="12" viewBox="0 0 10 12"><path d="M.9 1.700h7.600v9.400h-7.600z" fill="none" stroke="#333" stroke-width=".9"/><path d="M2 .3v1.400M4.600 .3v1.400M7.200 .3v1.400" stroke="#333" stroke-width=".9"/><path d="M4.700 5.200v3.600M3.700 5.200h1M3.600 8.900h2.300" stroke="#222" stroke-width="1" fill="none"/><circle cx="4.700" cy="3.600" r=".65" fill="#222"/></svg>
<div class="t" style="left:869.00px;top:671.00px;font-size:10.9px;line-height:15px;letter-spacing:0.188px;color:#222;">2024-11-17</div>
<svg style="left:933.2px;top:672.1px" width="12" height="12" viewBox="0 0 12 12"><circle cx="6" cy="6" r="4.900" fill="none" stroke="#6a6a6a" stroke-width="1.200"/><path d="M6 5.400v3.100" stroke="#5a5a5a" stroke-width="1.250"/><circle cx="6" cy="3.700" r=".75" fill="#5a5a5a"/></svg>
<div class="t" style="left:950.05px;top:671.00px;font-size:10.9px;line-height:15px;color:#222;">1</div>
<svg style="left:1081.2px;top:672.1px" width="12" height="12" viewBox="0 0 12 12"><circle cx="6" cy="6" r="4.900" fill="none" stroke="#6a6a6a" stroke-width="1.200"/><path d="M6 5.400v3.100" stroke="#5a5a5a" stroke-width="1.250"/><circle cx="6" cy="3.700" r=".75" fill="#5a5a5a"/></svg>
<div class="t" style="left:1098.05px;top:671.00px;font-size:10.9px;line-height:15px;letter-spacing:0.352px;color:#222;">201</div>
<svg style="left:1228.2px;top:672.1px" width="12" height="12" viewBox="0 0 12 12"><circle cx="6" cy="6" r="4.900" fill="none" stroke="#6a6a6a" stroke-width="1.200"/><path d="M6 5.400v3.100" stroke="#5a5a5a" stroke-width="1.250"/><circle cx="6" cy="3.700" r=".75" fill="#5a5a5a"/></svg>
<div class="t" style="left:1245.05px;top:671.00px;font-size:10.9px;line-height:15px;letter-spacing:0.290px;color:#222;">Текстовая строка</div>
<svg style="left:1375.2px;top:672.1px" width="12" height="12" viewBox="0 0 12 12"><circle cx="6" cy="6" r="4.900" fill="none" stroke="#6a6a6a" stroke-width="1.200"/><path d="M6 5.400v3.100" stroke="#5a5a5a" stroke-width="1.250"/><circle cx="6" cy="3.700" r=".75" fill="#5a5a5a"/></svg>
<div class="t" style="left:1392.05px;top:671.00px;font-size:10.9px;line-height:15px;color:#222;">2</div>
<svg style="left:1523.2px;top:672.1px" width="12" height="12" viewBox="0 0 12 12"><circle cx="6" cy="6" r="4.900" fill="none" stroke="#6a6a6a" stroke-width="1.200"/><path d="M6 5.400v3.100" stroke="#5a5a5a" stroke-width="1.250"/><circle cx="6" cy="3.700" r=".75" fill="#5a5a5a"/></svg>
<div class="t" style="left:1540.05px;top:671.00px;font-size:10.9px;line-height:15px;color:#222;">9</div>
<svg style="left:1670.2px;top:672.1px" width="12" height="12" viewBox="0 0 12 12"><circle cx="6" cy="6" r="4.900" fill="none" stroke="#6a6a6a" stroke-width="1.200"/><path d="M6 5.400v3.100" stroke="#5a5a5a" stroke-width="1.250"/><circle cx="6" cy="3.700" r=".75" fill="#5a5a5a"/></svg>
<div class="t" style="left:1687.05px;top:671.00px;font-size:10.9px;line-height:15px;color:#222;">9</div>
<svg style="left:1818.2px;top:672.1px" width="12" height="12" viewBox="0 0 12 12"><circle cx="6" cy="6" r="4.900" fill="none" stroke="#6a6a6a" stroke-width="1.200"/><path d="M6 5.400v3.100" stroke="#5a5a5a" stroke-width="1.250"/><circle cx="6" cy="3.700" r=".75" fill="#5a5a5a"/></svg>
<div class="t" style="left:1835.05px;top:671.00px;font-size:10.9px;line-height:15px;color:#222;">9</div>
<svg style="left:17.700px;top:700.0px" width="16" height="16" viewBox="0 0 16 16"><path d="M7.900 .3q.9 0 1.400.9l6 11.300q.8 1.900-1 1.900h-12.800q-1.800 0-1-1.900l6-11.300q.5-.9 1.400-.9z" fill="#dc3545"/><path d="M7.900 4.800v5" stroke="#909090" stroke-width="1.500" stroke-linecap="round"/><circle cx="7.900" cy="12.200" r=".9" fill="#909090"/></svg>
<div class="t" style="left:75.24px;top:699.00px;font-size:11.8px;line-height:17px;font-weight:700;color:#fff;">7</div>
<svg style="left:92.2px;top:702.1px" width="12" height="12" viewBox="0 0 12 12"><circle cx="6" cy="6" r="4.900" fill="none" stroke="#6a6a6a" stroke-width="1.200"/><path d="M6 5.400v3.100" stroke="#5a5a5a" stroke-width="1.250"/><circle cx="6" cy="3.700" r=".75" fill="#5a5a5a"/></svg>
<div class="t" style="left:109.05px;top:701.00px;font-size:10.9px;line-height:15px;color:#222;">D</div>
<svg style="left:239.2px;top:702.1px" width="12" height="12" viewBox="0 0 12 12"><circle cx="6" cy="6" r="4.900" fill="none" stroke="#6a6a6a" stroke-width="1.200"/><path d="M6 5.400v3.100" stroke="#5a5a5a" stroke-width="1.250"/><circle cx="6" cy="3.700" r=".75" fill="#5a5a5a"/></svg>
<div class="t" style="left:256.05px;top:701.00px;font-size:10.9px;line-height:15px;letter-spacing:0.178px;color:#222;">ZCCnc2hp9hvVyEdfN...</div>
<svg style="left:386.2px;top:702.1px" width="12" height="12" viewBox="0 0 12 12"><circle cx="6" cy="6" r="4.900" fill="none" stroke="#6a6a6a" stroke-width="1.200"/><path d="M6 5.400v3.100" stroke="#5a5a5a" stroke-width="1.250"/><circle cx="6" cy="3.700" r=".75" fill="#5a5a5a"/></svg>
<div class="t" style="left:403.05px;top:701.00px;font-size:10.9px;line-height:15px;color:#222;">W</div>
<svg style="left:534.2px;top:702.1px" width="12" height="12" viewBox="0 0 12 12"><circle cx="6" cy="6" r="4.900" fill="none" stroke="#6a6a6a" stroke-width="1.200"/><path d="M6 5.400v3.100" stroke="#5a5a5a" stroke-width="1.250"/><circle cx="6" cy="3.700" r=".75" fill="#5a5a5a"/></svg>
<div class="t" style="left:551.05px;top:701.00px;font-size:10.9px;line-height:15px;letter-spacing:0.188px;color:#222;">2087-11-28</div>
<div class="t" style="left:722.00px;top:701.00px;font-size:10.9px;line-height:15px;letter-spacing:0.098px;color:#222;">2025-02-26</div>
<svg style="left:786.200px;top:702.1px" width="12" height="12" viewBox="0 0 12 12"><circle cx="6" cy="6" r="4.900" fill="none" stroke="#6a6a6a" stroke-width="1.200"/><path d="M6 5.400v3.100" stroke="#5a5a5a" stroke-width="1.250"/><circle cx="6" cy="3.700" r=".75" fill="#5a5a5a"/></svg>
<svg style="left:800.700px;top:701.7px" width="10" height="12" viewBox="0 0 10 12"><path d="M.9 1.700h7.600v9.400h-7.600z" fill="none" stroke="#333" stroke-width=".9"/><path d="M2 .3v1.400M4.600 .3v1.400M7.200 .3v1.400" stroke="#333" stroke-width=".9"/><path d="M4.700 5.200v3.600M3.700 5.200h1M3.600 8.900h2.300" stroke="#222" stroke-width="1" fill="none"/><circle cx="4.700" cy="3.600" r=".65" fill="#222"/></svg>
<div class="t" style="left:869.00px;top:701.00px;font-size:10.9px;line-height:15px;letter-spacing:0.098px;color:#222;">2025-03-17</div>
<svg style="left:933.2px;top:702.1px" width="12" height="12" viewBox="0 0 12 12"><circle cx="6" cy="6" r="4.900" fill="none" stroke="#6a6a6a" stroke-width="1.200"/><path d="M6 5.400v3.100" stroke="#5a5a5a" stroke-width="1.250"/><circle cx="6" cy="3.700" r=".75" fill="#5a5a5a"/></svg>
<div class="t" style="left:950.05px;top:701.00px;font-size:10.9px;line-height:15px;color:#222;">2</div>
<svg style="left:1081.2px;top:702.1px" width="12" height="12" viewBox="0 0 12 12"><circle cx="6" cy="6" r="4.900" fill="none" stroke="#6a6a6a" stroke-width="1.200"/><path d="M6 5.400v3.100" stroke="#5a5a5a" stroke-width="1.250"/><circle cx="6" cy="3.700" r=".75" fill="#5a5a5a"/></svg>
<div class="t" style="left:1098.05px;top:701.00px;font-size:10.9px;line-height:15px;letter-spacing:0.352px;color:#222;">202</div>
<svg style="left:1228.2px;top:702.1px" width="12" height="12" viewBox="0 0 12 12"><circle cx="6" cy="6" r="4.900" fill="none" stroke="#6a6a6a" stroke-width="1.200"/><path d="M6 5.400v3.100" stroke="#5a5a5a" stroke-width="1.250"/><circle cx="6" cy="3.700" r=".75" fill="#5a5a5a"/></svg>
<div class="t" style="left:1245.05px;top:701.00px;font-size:10.9px;line-height:15px;letter-spacing:0.290px;color:#222;">Текстовая строка</div>
<svg style="left:1375.2px;top:702.1px" width="12" height="12" viewBox="0 0 12 12"><circle cx="6" cy="6" r="4.900" fill="none" stroke="#6a6a6a" stroke-width="1.200"/><path d="M6 5.400v3.100" stroke="#5a5a5a" stroke-width="1.250"/><circle cx="6" cy="3.700" r=".75" fill="#5a5a5a"/></svg>
<div class="t" style="left:1392.05px;top:701.00px;font-size:10.9px;line-height:15px;color:#222;">9</div>
<svg style="left:1523.2px;top:702.1px" width="12" height="12" viewBox="0 0 12 12"><circle cx="6" cy="6" r="4.900" fill="none" stroke="#6a6a6a" stroke-width="1.200"/><path d="M6 5.400v3.100" stroke="#5a5a5a" stroke-width="1.250"/><circle cx="6" cy="3.700" r=".75" fill="#5a5a5a"/></svg>
<div class="t" style="left:1540.05px;top:701.00px;font-size:10.9px;line-height:15px;color:#222;">1</div>
<svg style="left:1670.2px;top:702.1px" width="12" height="12" viewBox="0 0 12 12"><circle cx="6" cy="6" r="4.900" fill="none" stroke="#6a6a6a" stroke-width="1.200"/><path d="M6 5.400v3.100" stroke="#5a5a5a" stroke-width="1.250"/><circle cx="6" cy="3.700" r=".75" fill="#5a5a5a"/></svg>
<div class="t" style="left:1687.05px;top:701.00px;font-size:10.9px;line-height:15px;color:#222;">9</div>
<svg style="left:1818.2px;top:702.1px" width="12" height="12" viewBox="0 0 12 12"><circle cx="6" cy="6" r="4.900" fill="none" stroke="#6a6a6a" stroke-width="1.200"/><path d="M6 5.400v3.100" stroke="#5a5a5a" stroke-width="1.250"/><circle cx="6" cy="3.700" r=".75" fill="#5a5a5a"/></svg>
<div class="t" style="left:1835.05px;top:701.00px;font-size:10.9px;line-height:15px;color:#222;">9</div>
<svg style="left:17.700px;top:730.0px" width="16" height="16" viewBox="0 0 16 16"><path d="M7.900 .3q.9 0 1.400.9l6 11.300q.8 1.900-1 1.900h-12.800q-1.800 0-1-1.900l6-11.300q.5-.9 1.400-.9z" fill="#dc3545"/><path d="M7.900 4.800v5" stroke="#909090" stroke-width="1.500" stroke-linecap="round"/><circle cx="7.900" cy="12.200" r=".9" fill="#909090"/></svg>
<div class="t" style="left:75.24px;top:729.00px;font-size:11.8px;line-height:17px;font-weight:700;color:#fff;">8</div>
<svg style="left:92.2px;top:732.1px" width="12" height="12" viewBox="0 0 12 12"><circle cx="6" cy="6" r="4.900" fill="none" stroke="#6a6a6a" stroke-width="1.200"/><path d="M6 5.400v3.100" stroke="#5a5a5a" stroke-width="1.250"/><circle cx="6" cy="3.700" r=".75" fill="#5a5a5a"/></svg>
<div class="t" style="left:109.05px;top:731.00px;font-size:10.9px;line-height:15px;color:#222;">S</div>
<svg style="left:239.2px;top:732.1px" width="12" height="12" viewBox="0 0 12 12"><circle cx="6" cy="6" r="4.900" fill="none" stroke="#6a6a6a" stroke-width="1.200"/><path d="M6 5.400v3.100" stroke="#5a5a5a" stroke-width="1.250"/><circle cx="6" cy="3.700" r=".75" fill="#5a5a5a"/></svg>
<div class="t" style="left:256.05px;top:731.00px;font-size:10.9px;line-height:15px;color:#222;">s</div>
<svg style="left:386.2px;top:732.1px" width="12" height="12" viewBox="0 0 12 12"><circle cx="6" cy="6" r="4.900" fill="none" stroke="#6a6a6a" stroke-width="1.200"/><path d="M6 5.400v3.100" stroke="#5a5a5a" stroke-width="1.250"/><circle cx="6" cy="3.700" r=".75" fill="#5a5a5a"/></svg>
<div class="t" style="left:403.05px;top:731.00px;font-size:10.9px;line-height:15px;color:#222;">C</div>
<svg style="left:534.2px;top:732.1px" width="12" height="12" viewBox="0 0 12 12"><circle cx="6" cy="6" r="4.900" fill="none" stroke="#6a6a6a" stroke-width="1.200"/><path d="M6 5.400v3.100" stroke="#5a5a5a" stroke-width="1.250"/><circle cx="6" cy="3.700" r=".75" fill="#5a5a5a"/></svg>
<div class="t" style="left:551.05px;top:731.00px;font-size:10.9px;line-height:15px;letter-spacing:0.098px;color:#222;">2086-09-31</div>
<div class="t" style="left:722.00px;top:731.00px;font-size:10.9px;line-height:15px;letter-spacing:0.098px;color:#222;">2025-02-26</div>
<svg style="left:786.200px;top:732.1px" width="12" height="12" viewBox="0 0 12 12"><circle cx="6" cy="6" r="4.900" fill="none" stroke="#6a6a6a" stroke-width="1.200"/><path d="M6 5.400v3.100" stroke="#5a5a5a" stroke-width="1.250"/><circle cx="6" cy="3.700" r=".75" fill="#5a5a5a"/></svg>
<svg style="left:800.700px;top:731.7px" width="10" height="12" viewBox="0 0 10 12"><path d="M.9 1.700h7.600v9.400h-7.600z" fill="none" stroke="#333" stroke-width=".9"/><path d="M2 .3v1.400M4.600 .3v1.400M7.200 .3v1.400" stroke="#333" stroke-width=".9"/><path d="M4.700 5.200v3.600M3.700 5.200h1M3.600 8.900h2.300" stroke="#222" stroke-width="1" fill="none"/><circle cx="4.700" cy="3.600" r=".65" fill="#222"/></svg>
<div class="t" style="left:869.00px;top:731.00px;font-size:10.9px;line-height:15px;letter-spacing:0.098px;color:#222;">2024-10-01</div>
<svg style="left:933.2px;top:732.1px" width="12" height="12" viewBox="0 0 12 12"><circle cx="6" cy="6" r="4.900" fill="none" stroke="#6a6a6a" stroke-width="1.200"/><path d="M6 5.400v3.100" stroke="#5a5a5a" stroke-width="1.250"/><circle cx="6" cy="3.700" r=".75" fill="#5a5a5a"/></svg>
<div class="t" style="left:950.05px;top:731.00px;font-size:10.9px;line-height:15px;color:#222;">2</div>
<svg style="left:1081.2px;top:732.1px" width="12" height="12" viewBox="0 0 12 12"><circle cx="6" cy="6" r="4.900" fill="none" stroke="#6a6a6a" stroke-width="1.200"/><path d="M6 5.400v3.100" stroke="#5a5a5a" stroke-width="1.250"/><circle cx="6" cy="3.700" r=".75" fill="#5a5a5a"/></svg>
<div class="t" style="left:1098.05px;top:731.00px;font-size:10.9px;line-height:15px;letter-spacing:0.352px;color:#222;">202</div>
<svg style="left:1228.2px;top:732.1px" width="12" height="12" viewBox="0 0 12 12"><circle cx="6" cy="6" r="4.900" fill="none" stroke="#6a6a6a" stroke-width="1.200"/><path d="M6 5.400v3.100" stroke="#5a5a5a" stroke-width="1.250"/><circle cx="6" cy="3.700" r=".75" fill="#5a5a5a"/></svg>
<div class="t" style="left:1245.05px;top:731.00px;font-size:10.9px;line-height:15px;letter-spacing:0.290px;color:#222;">Текстовая строка</div>
<svg style="left:1375.2px;top:732.1px" width="12" height="12" viewBox="0 0 12 12"><circle cx="6" cy="6" r="4.900" fill="none" stroke="#6a6a6a" stroke-width="1.200"/><path d="M6 5.400v3.100" stroke="#5a5a5a" stroke-width="1.250"/><circle cx="6" cy="3.700" r=".75" fill="#5a5a5a"/></svg>
<div class="t" style="left:1392.05px;top:731.00px;font-size:10.9px;line-height:15px;color:#222;">8</div>
<svg style="left:1523.2px;top:732.1px" width="12" height="12" viewBox="0 0 12 12"><circle cx="6" cy="6" r="4.900" fill="none" stroke="#6a6a6a" stroke-width="1.200"/><path d="M6 5.400v3.100" stroke="#5a5a5a" stroke-width="1.250"/><circle cx="6" cy="3.700" r=".75" fill="#5a5a5a"/></svg>
<div class="t" style="left:1540.05px;top:731.00px;font-size:10.9px;line-height:15px;color:#222;">1</div>
<svg style="left:1670.2px;top:732.1px" width="12" height="12" viewBox="0 0 12 12"><circle cx="6" cy="6" r="4.900" fill="none" stroke="#6a6a6a" stroke-width="1.200"/><path d="M6 5.400v3.100" stroke="#5a5a5a" stroke-width="1.250"/><circle cx="6" cy="3.700" r=".75" fill="#5a5a5a"/></svg>
<div class="t" style="left:1687.05px;top:731.00px;font-size:10.9px;line-height:15px;color:#222;">0</div>
<svg style="left:1818.2px;top:732.1px" width="12" height="12" viewBox="0 0 12 12"><circle cx="6" cy="6" r="4.900" fill="none" stroke="#6a6a6a" stroke-width="1.200"/><path d="M6 5.400v3.100" stroke="#5a5a5a" stroke-width="1.250"/><circle cx="6" cy="3.700" r=".75" fill="#5a5a5a"/></svg>
<div class="t" style="left:1835.05px;top:731.00px;font-size:10.9px;line-height:15px;color:#222;">9</div>
<svg style="left:17.700px;top:760.0px" width="16" height="16" viewBox="0 0 16 16"><path d="M7.900 .3q.9 0 1.400.9l6 11.300q.8 1.900-1 1.900h-12.800q-1.800 0-1-1.900l6-11.300q.5-.9 1.400-.9z" fill="#dc3545"/><path d="M7.900 4.800v5" stroke="#909090" stroke-width="1.500" stroke-linecap="round"/><circle cx="7.900" cy="12.200" r=".9" fill="#909090"/></svg>
<div class="t" style="left:75.24px;top:759.00px;font-size:11.8px;line-height:17px;font-weight:700;color:#fff;">9</div>
<svg style="left:92.2px;top:762.1px" width="12" height="12" viewBox="0 0 12 12"><circle cx="6" cy="6" r="4.900" fill="none" stroke="#6a6a6a" stroke-width="1.200"/><path d="M6 5.400v3.100" stroke="#5a5a5a" stroke-width="1.250"/><circle cx="6" cy="3.700" r=".75" fill="#5a5a5a"/></svg>
<div class="t" style="left:109.05px;top:761.00px;font-size:10.9px;line-height:15px;color:#222;">e</div>
<svg style="left:239.2px;top:762.1px" width="12" height="12" viewBox="0 0 12 12"><circle cx="6" cy="6" r="4.900" fill="none" stroke="#6a6a6a" stroke-width="1.200"/><path d="M6 5.400v3.100" stroke="#5a5a5a" stroke-width="1.250"/><circle cx="6" cy="3.700" r=".75" fill="#5a5a5a"/></svg>
<div class="t" style="left:256.05px;top:761.00px;font-size:10.9px;line-height:15px;letter-spacing:-0.040px;color:#222;">7j-05AfCVkiSCZ1AKcP...</div>
<svg style="left:386.2px;top:762.1px" width="12" height="12" viewBox="0 0 12 12"><circle cx="6" cy="6" r="4.900" fill="none" stroke="#6a6a6a" stroke-width="1.200"/><path d="M6 5.400v3.100" stroke="#5a5a5a" stroke-width="1.250"/><circle cx="6" cy="3.700" r=".75" fill="#5a5a5a"/></svg>
<div class="t" style="left:403.05px;top:761.00px;font-size:10.9px;line-height:15px;letter-spacing:-0.094px;color:#222;">EnlicG.JTG9eL6N7.38t...</div>
<svg style="left:534.2px;top:762.1px" width="12" height="12" viewBox="0 0 12 12"><circle cx="6" cy="6" r="4.900" fill="none" stroke="#6a6a6a" stroke-width="1.200"/><path d="M6 5.400v3.100" stroke="#5a5a5a" stroke-width="1.250"/><circle cx="6" cy="3.700" r=".75" fill="#5a5a5a"/></svg>
<div class="t" style="left:551.05px;top:761.00px;font-size:10.9px;line-height:15px;letter-spacing:0.098px;color:#222;">2001-08-06</div>
<div class="t" style="left:722.00px;top:761.00px;font-size:10.9px;line-height:15px;letter-spacing:0.098px;color:#222;">2024-12-15</div>
<svg style="left:786.200px;top:762.1px" width="12" height="12" viewBox="0 0 12 12"><circle cx="6" cy="6" r="4.900" fill="none" stroke="#6a6a6a" stroke-width="1.200"/><path d="M6 5.400v3.100" stroke="#5a5a5a" stroke-width="1.250"/><circle cx="6" cy="3.700" r=".75" fill="#5a5a5a"/></svg>
<svg style="left:800.700px;top:761.7px" width="10" height="12" viewBox="0 0 10 12"><path d="M.9 1.700h7.600v9.400h-7.600z" fill="none" stroke="#333" stroke-width=".9"/><path d="M2 .3v1.400M4.600 .3v1.400M7.200 .3v1.400" stroke="#333" stroke-width=".9"/><path d="M4.700 5.200v3.600M3.700 5.200h1M3.600 8.900h2.300" stroke="#222" stroke-width="1" fill="none"/><circle cx="4.700" cy="3.600" r=".65" fill="#222"/></svg>
<div class="t" style="left:869.00px;top:761.00px;font-size:10.9px;line-height:15px;letter-spacing:0.098px;color:#222;">2025-01-29</div>
<svg style="left:933.2px;top:762.1px" width="12" height="12" viewBox="0 0 12 12"><circle cx="6" cy="6" r="4.900" fill="none" stroke="#6a6a6a" stroke-width="1.200"/><path d="M6 5.400v3.100" stroke="#5a5a5a" stroke-width="1.250"/><circle cx="6" cy="3.700" r=".75" fill="#5a5a5a"/></svg>
<div class="t" style="left:950.05px;top:761.00px;font-size:10.9px;line-height:15px;color:#222;">2</div>
<svg style="left:1081.2px;top:762.1px" width="12" height="12" viewBox="0 0 12 12"><circle cx="6" cy="6" r="4.900" fill="none" stroke="#6a6a6a" stroke-width="1.200"/><path d="M6 5.400v3.100" stroke="#5a5a5a" stroke-width="1.250"/><circle cx="6" cy="3.700" r=".75" fill="#5a5a5a"/></svg>
<div class="t" style="left:1098.05px;top:761.00px;font-size:10.9px;line-height:15px;letter-spacing:0.352px;color:#222;">202</div>
<svg style="left:1228.2px;top:762.1px" width="12" height="12" viewBox="0 0 12 12"><circle cx="6" cy="6" r="4.900" fill="none" stroke="#6a6a6a" stroke-width="1.200"/><path d="M6 5.400v3.100" stroke="#5a5a5a" stroke-width="1.250"/><circle cx="6" cy="3.700" r=".75" fill="#5a5a5a"/></svg>
<div class="t" style="left:1245.05px;top:761.00px;font-size:10.9px;line-height:15px;letter-spacing:0.290px;color:#222;">Текстовая строка</div>
<svg style="left:1375.2px;top:762.1px" width="12" height="12" viewBox="0 0 12 12"><circle cx="6" cy="6" r="4.900" fill="none" stroke="#6a6a6a" stroke-width="1.200"/><path d="M6 5.400v3.100" stroke="#5a5a5a" stroke-width="1.250"/><circle cx="6" cy="3.700" r=".75" fill="#5a5a5a"/></svg>
<div class="t" style="left:1392.05px;top:761.00px;font-size:10.9px;line-height:15px;color:#222;">0</div>
<svg style="left:1523.2px;top:762.1px" width="12" height="12" viewBox="0 0 12 12"><circle cx="6" cy="6" r="4.900" fill="none" stroke="#6a6a6a" stroke-width="1.200"/><path d="M6 5.400v3.100" stroke="#5a5a5a" stroke-width="1.250"/><circle cx="6" cy="3.700" r=".75" fill="#5a5a5a"/></svg>
<div class="t" style="left:1540.05px;top:761.00px;font-size:10.9px;line-height:15px;color:#222;">0</div>
<svg style="left:1670.2px;top:762.1px" width="12" height="12" viewBox="0 0 12 12"><circle cx="6" cy="6" r="4.900" fill="none" stroke="#6a6a6a" stroke-width="1.200"/><path d="M6 5.400v3.100" stroke="#5a5a5a" stroke-width="1.250"/><circle cx="6" cy="3.700" r=".75" fill="#5a5a5a"/></svg>
<div class="t" style="left:1687.05px;top:761.00px;font-size:10.9px;line-height:15px;color:#222;">9</div>
<svg style="left:1818.2px;top:762.1px" width="12" height="12" viewBox="0 0 12 12"><circle cx="6" cy="6" r="4.900" fill="none" stroke="#6a6a6a" stroke-width="1.200"/><path d="M6 5.400v3.100" stroke="#5a5a5a" stroke-width="1.250"/><circle cx="6" cy="3.700" r=".75" fill="#5a5a5a"/></svg>
<div class="t" style="left:1835.05px;top:761.00px;font-size:10.9px;line-height:15px;color:#222;">0</div>
<svg style="left:0;top:0" width="1918" height="860" viewBox="0 0 1918 860" fill="none">
<defs><filter id="sh" x="-5%" y="-5%" width="110%" height="110%"><feGaussianBlur stdDeviation=".8"/></filter></defs>
<g stroke="#10201c" stroke-opacity=".3" stroke-width="2.200" filter="url(#sh)" transform="translate(3,3)">
<rect x="16" y="155" width="532" height="103"/><rect x="943" y="157.200" width="950" height="76.800"/><rect x="1060" y="505" width="325" height="289"/>
<path d="M548 258L943.500 234.500M548 258L1060 505M943.500 234.500L1060 505"/></g>
<g stroke="#a60006" stroke-width="2">
<rect x="16" y="155" width="532" height="103"/><rect x="943" y="157.200" width="950" height="76.800"/><rect x="1060" y="505" width="325" height="289"/>
<path d="M548 258L943.500 234.500M548 258L1060 505M943.500 234.500L1060 505"/></g>
</svg>
</div></body></html>
